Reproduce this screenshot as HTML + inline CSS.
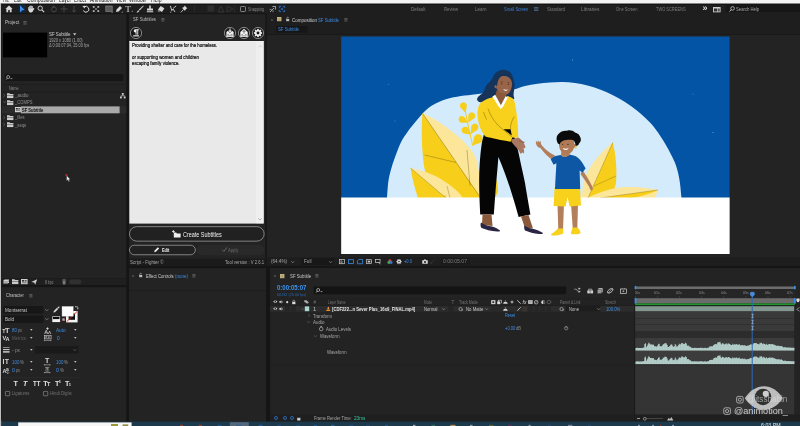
<!DOCTYPE html>
<html>
<head>
<meta charset="utf-8">
<title>After Effects - SF Subtitle</title>
<style>
*{margin:0;padding:0;box-sizing:border-box}
html,body{width:800px;height:426px;overflow:hidden;background:#151515}
body{position:relative;font-family:"Liberation Sans",sans-serif;font-size:5.5px;color:#b4b4b4;line-height:1}
.a{position:absolute}
.t{position:absolute;white-space:nowrap;line-height:1;display:block}
svg{position:absolute;overflow:visible}
</style>
</head>
<body>
<div id="root" style="position:absolute;left:0;top:0;width:800px;height:426px;will-change:transform;filter:blur(0.35px)">

<!-- ===== menu strip (cut off) ===== -->
<svg style="left:0px;top:0px" width="800" height="4"><rect x="0.00" y="0.00" width="800.00" height="3.80" fill="#f3f3f3"/></svg>
<div class="a" style="left:0;top:0;width:800px;height:3.6px;overflow:hidden">
<span class="t" style="top:-3px;font-size:6.8px;color:#1a1a1a;left:3.00px;transform:scaleX(0.548);transform-origin:left center;">File</span>
<span class="t" style="top:-3px;font-size:6.8px;color:#1a1a1a;left:14.00px;transform:scaleX(0.640);transform-origin:left center;">Edit</span>
<span class="t" style="top:-3px;font-size:6.8px;color:#1a1a1a;left:27.00px;transform:scaleX(0.741);transform-origin:left center;">Composition</span>
<span class="t" style="top:-3px;font-size:6.8px;color:#1a1a1a;left:58.50px;transform:scaleX(0.705);transform-origin:left center;">Layer</span>
<span class="t" style="top:-3px;font-size:6.8px;color:#1a1a1a;left:74.00px;transform:scaleX(0.695);transform-origin:left center;">Effect</span>
<span class="t" style="top:-3px;font-size:6.8px;color:#1a1a1a;left:89.50px;transform:scaleX(0.744);transform-origin:left center;">Animation</span>
<span class="t" style="top:-3px;font-size:6.8px;color:#1a1a1a;left:115.50px;transform:scaleX(0.684);transform-origin:left center;">View</span>
<span class="t" style="top:-3px;font-size:6.8px;color:#1a1a1a;left:128.50px;transform:scaleX(0.703);transform-origin:left center;">Window</span>
<span class="t" style="top:-3px;font-size:6.8px;color:#1a1a1a;left:150.50px;transform:scaleX(0.751);transform-origin:left center;">Help</span>
</div>

<!-- ===== toolbar ===== -->
<svg style="left:0px;top:3px" width="800" height="11"><rect x="0.00" y="0.80" width="800.00" height="9.40" fill="#1e1e1e"/></svg>
<svg style="left:0px;top:3px" width="2" height="424"><rect x="0.00" y="0.80" width="1.80" height="423.00" fill="#0c0c0c"/></svg>
<svg style="left:0px;top:3px" width="800" height="2"><rect x="0.00" y="0.80" width="800.00" height="0.80" fill="#0e0e0e"/></svg>

<!-- ===== panels ===== -->
<svg style="left:2px;top:14px" width="125" height="271"><rect x="0.00" y="0.20" width="124.30" height="270.80" fill="#232323"/></svg>
<svg style="left:129px;top:14px" width="137" height="252"><rect x="0.00" y="0.20" width="136.40" height="251.80" fill="#232323"/></svg>
<svg style="left:266px;top:12px" width="534" height="254"><rect x="0.80" y="0.80" width="533.20" height="252.80" fill="#232323"/></svg>
<svg style="left:2px;top:287px" width="125" height="135"><rect x="0.00" y="0.20" width="124.30" height="134.80" fill="#232323"/></svg>
<svg style="left:129px;top:268px" width="137" height="154"><rect x="0.00" y="0.20" width="137.00" height="153.80" fill="#232323"/></svg>
<svg style="left:270px;top:268px" width="530" height="154"><rect x="0.20" y="0.00" width="529.80" height="154.00" fill="#232323"/></svg>

<!-- ===== toolbar icons ===== -->
<svg style="left:5px;top:4.8px;" width="8" height="8" viewBox="0 0 8 8"><path d="M4,0.6 L7.6,3.9 L6.6,3.9 L6.6,7.2 L4.8,7.2 L4.8,5 L3.2,5 L3.2,7.2 L1.4,7.2 L1.4,3.9 L0.4,3.9 Z" fill="#d8d8d8"/></svg>
<svg style="left:18px;top:4px" width="8" height="9"><rect x="0.40" y="0.40" width="6.80" height="8.40" fill="#16263a"/></svg>
<svg style="left:17.6px;top:4.8px;" width="8" height="8" viewBox="0 0 8 8"><path d="M2,0.2 L6.6,5 L4.2,5.2 L2,7.6 Z" fill="#3b8eea"/></svg>
<svg style="left:27px;top:4.6px;" width="8" height="8" viewBox="0 0 8 8"><path d="M1.2,4.4 L1.2,2.7 Q1.2,2.1 1.75,2.1 Q2.3,2.1 2.3,2.7 L2.3,1.4 Q2.3,0.8 2.85,0.8 Q3.4,0.8 3.4,1.4 L3.4,1 Q3.4,0.4 4,0.4 Q4.6,0.4 4.6,1 L4.6,1.6 Q4.6,1 5.2,1 Q5.8,1 5.8,1.6 L5.8,3.8 L6.4,3.1 Q7,2.7 7.4,3.3 L6.3,5.6 Q5.6,7.5 4,7.5 Q1.8,7.5 1.2,4.4 Z" fill="#d8d8d8"/><path d="M2.3,2.6 V3.8 M3.4,1.4 V3.6 M4.6,1.6 V3.6" stroke="#1e1e1e" stroke-width="0.3"/></svg>
<svg style="left:37px;top:4.8px;" width="8" height="8" viewBox="0 0 8 8"><circle cx="3.2" cy="3.2" r="2.2" fill="none" stroke="#d8d8d8" stroke-width="0.9"/><path d="M4.8,4.8 L7.2,7.2" stroke="#d8d8d8" stroke-width="1.1"/></svg>
<svg style="left:50px;top:4.8px;" width="8" height="8" viewBox="0 0 8 8"><circle cx="4" cy="4.4" r="2.4" fill="none" stroke="#4a4a4a" stroke-width="0.9"/><path d="M2,1.2 L4.4,0.4 L4.2,2.8 Z" fill="#4a4a4a"/></svg>
<svg style="left:60px;top:4.8px;" width="8" height="8" viewBox="0 0 8 8"><path d="M4,0.6 L4,7.4 M0.6,4 L7.4,4" stroke="#4a4a4a" stroke-width="0.9"/></svg>
<svg style="left:70px;top:4.8px;" width="8" height="8" viewBox="0 0 8 8"><path d="M4,0.8 L4,7 M2.4,5.2 L4,7.2 L5.6,5.2" stroke="#4a4a4a" stroke-width="0.9" fill="none"/></svg>
<svg style="left:82px;top:4.8px;" width="8" height="8" viewBox="0 0 8 8"><path d="M2.2,2 A2.9,2.9 0 1 1 1.3,5.4" fill="none" stroke="#d8d8d8" stroke-width="1"/><path d="M0.4,0.9 L3.4,0.7 L2.6,3.6 Z" fill="#d8d8d8"/></svg>
<svg style="left:91.8px;top:4.8px;" width="8" height="8" viewBox="0 0 8 8"><path d="M0.8,1 h1.8 v1.8 h-1.8z M5.4,1 h1.8 v1.8 h-1.8z M0.8,5.2 h1.8 v1.8 h-1.8z M5.4,5.2 h1.8 v1.8 h-1.8z" fill="#b4b4b4"/><path d="M2.6,2.8 L5.4,5.2 M5.4,2.8 L2.6,5.2" stroke="#b4b4b4" stroke-width="0.5"/></svg>
<svg style="left:105px;top:4.8px;" width="8" height="8" viewBox="0 0 8 8"><rect x="0.8" y="1" width="6.4" height="5.6" fill="#5a5a5a" stroke="#8a8a8a" stroke-width="0.6"/><path d="M6.2,7.6 L7.6,7.6 L7.6,6.4 Z" fill="#d8d8d8"/></svg>
<svg style="left:114.5px;top:4.8px;" width="8" height="8" viewBox="0 0 8 8"><path d="M1,7 L1.6,4.4 L5,1 L7,3 L3.6,6.4 Z" fill="#d8d8d8"/><path d="M6.4,7.6 L7.8,7.6 L7.8,6.4 Z" fill="#d8d8d8"/></svg>
<span class="t" style="top:5px;font-size:9.2px;color:#d8d8d8;left:125.20px;font-family:'Liberation Serif',serif;">T</span>
<svg style="left:130.2px;top:9.2px;" width="4" height="4" viewBox="0 0 4 4"><path d="M1.4,2.6 L2.8,2.6 L2.8,1.4 Z" fill="#d8d8d8"/></svg>
<svg style="left:136px;top:4.8px;" width="8" height="8" viewBox="0 0 8 8"><path d="M7.2,0.6 L7.6,1.2 L3.6,5.6 L2.8,4.8 Z" fill="#d8d8d8"/><path d="M2.4,5.2 L3.2,6 C2.6,7.4 1.2,7.6 0.4,7.4 C1.4,6.8 1.4,5.8 2.4,5.2 Z" fill="#d8d8d8"/></svg>
<svg style="left:146.4px;top:4.8px;" width="8" height="8" viewBox="0 0 8 8"><path d="M3.2,0.6 h1.6 v2.8 h2.2 v2 h-6 v-2 h2.2 Z M0.8,6.2 h6.4 v1.1 h-6.4 Z" fill="#d8d8d8"/></svg>
<svg style="left:156.6px;top:4.8px;" width="8" height="8" viewBox="0 0 8 8"><path d="M3.6,1 L7.4,3.2 L5,7 L1,4.8 Z" fill="#d8d8d8"/><path d="M1,4.8 L3,6 L2.2,7.2 L0.6,6 Z" fill="#8a8a8a"/></svg>
<svg style="left:168.6px;top:4.8px;" width="8" height="8" viewBox="0 0 8 8"><path d="M1.4,0.8 L2.8,5.6 L4,4 L6,7 M4.2,3.4 L7.2,0.8" stroke="#d8d8d8" stroke-width="0.9" fill="none"/><path d="M0.8,7.4 l1.4,0 l0,-1.2z" fill="#d8d8d8"/></svg>
<svg style="left:180.2px;top:4.8px;" width="8" height="8" viewBox="0 0 8 8"><path d="M4.6,0.6 L7.4,3.4 L6.2,3.8 L5.2,5.6 L4.4,5.4 L2.6,3.6 L2.4,2.8 L4.2,1.8 Z" fill="#d8d8d8"/><path d="M3.4,4.6 L0.8,7.4" stroke="#d8d8d8" stroke-width="0.8"/></svg>
<svg style="left:194px;top:5px" width="1" height="8"><rect x="0.40" y="0.00" width="0.50" height="7.40" fill="#333"/></svg>
<svg style="left:234px;top:5px" width="1" height="8"><rect x="0.00" y="0.00" width="0.50" height="7.40" fill="#333"/></svg>
<svg style="left:207px;top:5px" width="8" height="7"><rect x="0.50" y="0.40" width="6.60" height="6.20" fill="#2e2e2e"/></svg>
<svg style="left:217px;top:4.8px;" width="8" height="8" viewBox="0 0 8 8"><path d="M4,1 L6.8,7 L1.2,7 Z" fill="none" stroke="#3a3a3a" stroke-width="0.8"/></svg>
<svg style="left:226px;top:4.8px;" width="8" height="8" viewBox="0 0 8 8"><path d="M1,1 L7,4 L1,7 Z" fill="none" stroke="#3a3a3a" stroke-width="0.8"/></svg>
<svg style="left:240px;top:5.6px;" width="6" height="6" viewBox="0 0 6 6"><rect x="0.5" y="0.5" width="5" height="5" rx="0.8" fill="none" stroke="#9a9a9a" stroke-width="0.8"/></svg>
<span class="t" style="top:7px;font-size:5.6px;color:#8a8a8a;left:248.00px;transform:scaleX(0.684);transform-origin:left center;">Snapping</span>
<svg style="left:269px;top:4.8px;" width="8" height="8" viewBox="0 0 8 8"><path d="M1,7 L5,3 M3.4,1.6 L6.6,1.4 L6.4,4.6" stroke="#b0b0b0" stroke-width="0.9" fill="none"/><path d="M0.6,4.4 l2,0 M4,7.2 l0,-2" stroke="#b0b0b0" stroke-width="0.7"/></svg>
<svg style="left:277px;top:4px" width="9" height="9"><rect x="0.60" y="0.60" width="8.00" height="7.80" fill="#1a2433"/></svg>
<svg style="left:277.6px;top:4.8px;" width="8" height="8" viewBox="0 0 8 8"><path d="M1.4,3 V1.4 H3 M5,1.4 H6.6 V3 M6.6,5 V6.6 H5 M3,6.6 H1.4 V5" stroke="#3177d0" stroke-width="0.8" fill="none"/><path d="M3,3 L5,5 M5,3 L3,5" stroke="#3177d0" stroke-width="0.6"/></svg>

<!-- ===== workspace bar ===== -->
<span class="t" style="top:7px;font-size:5.4px;color:#7c7c7c;left:411.30px;transform:scaleX(0.853);transform-origin:left center;">Default</span>
<span class="t" style="top:7px;font-size:5.4px;color:#7c7c7c;left:444.00px;transform:scaleX(0.791);transform-origin:left center;">Review</span>
<span class="t" style="top:7px;font-size:5.4px;color:#7c7c7c;left:475.40px;transform:scaleX(0.825);transform-origin:left center;">Learn</span>
<span class="t" style="top:7px;font-size:5.4px;color:#3a7fd6;left:504.20px;transform:scaleX(0.760);transform-origin:left center;">Small Screen</span>
<span class="t" style="top:7px;font-size:5.4px;color:#7c7c7c;left:546.50px;transform:scaleX(0.821);transform-origin:left center;">Standard</span>
<span class="t" style="top:7px;font-size:5.4px;color:#7c7c7c;left:581.40px;transform:scaleX(0.888);transform-origin:left center;">Libraries</span>
<span class="t" style="top:7px;font-size:5.4px;color:#7c7c7c;left:616.20px;transform:scaleX(0.750);transform-origin:left center;">One Screen</span>
<span class="t" style="top:7px;font-size:5.4px;color:#7c7c7c;left:655.80px;transform:scaleX(0.736);transform-origin:left center;">TWO SCREENS</span>
<svg style="left:534.2px;top:7.4px;" width="4.4" height="4" viewBox="0 0 4.4 4"><path d="M0,0.6 H4.4 M0,2 H4.4 M0,3.4 H4.4" stroke="#5a7fb0" stroke-width="0.7"/></svg>
<span class="t" style="top:3.95px;font-size:9px;color:#d8d8d8;font-weight:bold;left:702.60px;">»</span>
<svg style="left:713px;top:6.6px;" width="7.6" height="5.4" viewBox="0 0 7.6 5.4"><rect x="0" y="0" width="7.6" height="5.4" fill="#cfcfcf"/><rect x="0.9" y="1.5" width="3.4" height="3" fill="#333"/><rect x="5" y="1.5" width="1.8" height="3" fill="#555"/></svg>
<svg style="left:725px;top:4px" width="75" height="8"><rect x="0.60" y="0.80" width="74.40" height="7.20" fill="#161616"/></svg>
<svg style="left:728.6px;top:6.2px;" width="6" height="6" viewBox="0 0 6 6"><circle cx="3.6" cy="2.4" r="1.8" fill="none" stroke="#c8c8c8" stroke-width="0.8"/><path d="M2.3,3.7 L0.5,5.6" stroke="#c8c8c8" stroke-width="0.9"/></svg>
<span class="t" style="top:7px;font-size:5.4px;color:#a8a8a8;left:736.40px;transform:scaleX(0.781);transform-origin:left center;">Search Help</span>

<!-- ===== project panel ===== -->
<span class="t" style="top:20px;font-size:5.8px;color:#c4c4c4;left:5.00px;transform:scaleX(0.787);transform-origin:left center;">Project</span>
<svg style="left:23.4px;top:20.8px;" width="4" height="3.6" viewBox="0 0 4 3.6"><path d="M0.3,0.5 H3.7 M0.3,1.8 H3.7 M0.3,3.1 H3.7" stroke="#8e8e8e" stroke-width="0.5"/></svg>
<svg style="left:3px;top:32px" width="45" height="26"><rect x="0.00" y="0.60" width="44.20" height="24.80" fill="#000"/></svg>
<span class="t" style="top:32px;font-size:5.6px;color:#d6d6d6;left:49.20px;transform:scaleX(0.781);transform-origin:left center;">SF Subtitle</span>
<svg style="left:73px;top:33.4px;" width="3.4" height="2.6" viewBox="0 0 3.4 2.6"><path d="M0,0.2 L3.4,0.2 L1.7,2.4 Z" fill="#c8c8c8"/></svg>
<span class="t" style="top:38px;font-size:5.2px;color:#a4a4a4;left:49.20px;transform:scaleX(0.774);transform-origin:left center;">1920 x 1080 (1.00)</span>
<span class="t" style="top:43px;font-size:5.2px;color:#a4a4a4;left:49.20px;transform:scaleX(0.755);transform-origin:left center;">Δ 0:00:07:04, 25.00 fps</span>
<svg style="left:4px;top:74px" width="120" height="7"><rect x="0.80" y="0.00" width="118.60" height="7.00" fill="#161616" rx="1.00"/></svg>
<svg style="left:6px;top:75px;" width="7" height="5" viewBox="0 0 7 5"><circle cx="2.2" cy="2" r="1.5" fill="none" stroke="#c0c0c0" stroke-width="0.7"/><path d="M1.2,3.1 L0.2,4.6 M4.6,3.6 l1.8,0" stroke="#c0c0c0" stroke-width="0.7"/></svg>
<svg style="left:2px;top:84px" width="125" height="1"><rect x="0.00" y="0.20" width="124.30" height="0.50" fill="#1b1b1b"/></svg>
<span class="t" style="top:87px;font-size:4.8px;color:#8e8e8e;left:9.00px;transform:scaleX(0.750);transform-origin:left center;">Name</span>
<svg style="left:2px;top:91px" width="125" height="2"><rect x="0.00" y="0.80" width="124.30" height="0.60" fill="#1a1a1a"/></svg>
<svg style="left:2.8px;top:93.7px;" width="2.4" height="3.2" viewBox="0 0 2.4 3.2"><path d="M0.3,0.2 L2,1.6 L0.3,3" stroke="#6a6a6a" stroke-width="0.6" fill="none"/></svg>
<svg style="left:7.2px;top:92.7px;" width="6.4" height="5.2" viewBox="0 0 6.4 5.2"><path d="M0,0.3 H2.6 L3.2,1.1 H6.4 V1.9 H0 Z" fill="#cacaca"/><rect x="0" y="2.4" width="6.4" height="2.7" fill="#cacaca"/></svg>
<span class="t" style="top:93px;font-size:5.6px;color:#929292;left:15.40px;transform:scaleX(0.809);transform-origin:left center;">_audio</span>
<svg style="left:2.8px;top:101.4px;" width="3.2" height="2.4" viewBox="0 0 3.2 2.4"><path d="M0.2,0.3 L1.6,2 L3,0.3" stroke="#6a6a6a" stroke-width="0.6" fill="none"/></svg>
<svg style="left:7.2px;top:100px;" width="6.4" height="5.2" viewBox="0 0 6.4 5.2"><path d="M0,0.3 H2.6 L3.2,1.1 H6.4 V1.9 H0 Z" fill="#cacaca"/><rect x="0" y="2.4" width="6.4" height="2.7" fill="#cacaca"/></svg>
<span class="t" style="top:100px;font-size:5.6px;color:#929292;left:15.40px;transform:scaleX(0.736);transform-origin:left center;">_COMPS</span>
<svg style="left:2.8px;top:116px;" width="2.4" height="3.2" viewBox="0 0 2.4 3.2"><path d="M0.3,0.2 L2,1.6 L0.3,3" stroke="#6a6a6a" stroke-width="0.6" fill="none"/></svg>
<svg style="left:7.2px;top:115px;" width="6.4" height="5.2" viewBox="0 0 6.4 5.2"><path d="M0,0.3 H2.6 L3.2,1.1 H6.4 V1.9 H0 Z" fill="#cacaca"/><rect x="0" y="2.4" width="6.4" height="2.7" fill="#cacaca"/></svg>
<span class="t" style="top:115px;font-size:5.6px;color:#929292;left:15.40px;transform:scaleX(0.734);transform-origin:left center;">_files</span>
<svg style="left:2.8px;top:123.4px;" width="2.4" height="3.2" viewBox="0 0 2.4 3.2"><path d="M0.3,0.2 L2,1.6 L0.3,3" stroke="#6a6a6a" stroke-width="0.6" fill="none"/></svg>
<svg style="left:7.2px;top:122.4px;" width="6.4" height="5.2" viewBox="0 0 6.4 5.2"><path d="M0,0.3 H2.6 L3.2,1.1 H6.4 V1.9 H0 Z" fill="#cacaca"/><rect x="0" y="2.4" width="6.4" height="2.7" fill="#cacaca"/></svg>
<span class="t" style="top:123px;font-size:5.6px;color:#929292;left:15.40px;transform:scaleX(0.749);transform-origin:left center;">_seqs</span>
<svg style="left:2px;top:106px" width="125" height="8"><rect x="0.00" y="0.20" width="124.30" height="7.20" fill="#2b2b2b"/></svg>
<svg style="left:20px;top:106px" width="100" height="8"><rect x="0.80" y="0.40" width="98.80" height="6.90" fill="#a9a9a9"/></svg>
<svg style="left:14.6px;top:107.2px;" width="5.8" height="5.2" viewBox="0 0 5.8 5.2"><rect x="0" y="0" width="5.8" height="5.2" fill="#d8d8d8"/><rect x="0.8" y="1" width="2" height="1.6" fill="#333"/><rect x="3.2" y="1" width="1.8" height="1.6" fill="#666"/><path d="M0.8,3.6 H5" stroke="#444" stroke-width="0.6"/></svg>
<span class="t" style="top:108px;font-size:5.8px;color:#0a0a0a;font-weight:bold;left:22.00px;transform:scaleX(0.700);transform-origin:left center;">SF Subtitle</span>
<svg style="left:119.8px;top:92.6px;" width="5.6" height="5.4" viewBox="0 0 5.6 5.4"><rect x="1.9" y="0" width="1.8" height="1.8" fill="#cfcfcf"/><rect x="0" y="3.6" width="1.8" height="1.8" fill="#cfcfcf"/><rect x="3.8" y="3.6" width="1.8" height="1.8" fill="#cfcfcf"/><path d="M2.8,1.8 V2.8 M0.9,3.6 V2.8 H4.7 V3.6" stroke="#cfcfcf" stroke-width="0.6" fill="none"/></svg>
<svg style="left:2px;top:278px" width="125" height="7"><rect x="0.00" y="0.60" width="124.30" height="6.40" fill="#1f1f1f"/></svg>
<svg style="left:2px;top:278px" width="125" height="1"><rect x="0.00" y="0.00" width="124.30" height="0.50" fill="#191919"/></svg>
<svg style="left:2.6px;top:279.2px;" width="6.4" height="5.2" viewBox="0 0 6.4 5.2"><path d="M0.4,1.6 L1.6,0.4 H6 V3.2 L4.8,4.6 H0.4 Z" fill="#d0d0d0"/><path d="M0.4,3 H4.6 L6,1.6" stroke="#333" stroke-width="0.5" fill="none"/></svg>
<svg style="left:11.6px;top:279.2px;" width="6.4" height="5.2" viewBox="0 0 6.4 5.2"><path d="M0,0.3 H2.6 L3.2,1.1 H6.4 V1.9 H0 Z" fill="#cacaca"/><rect x="0" y="2.4" width="6.4" height="2.7" fill="#cacaca"/></svg>
<svg style="left:21.2px;top:279.2px;" width="6.6" height="5.2" viewBox="0 0 6.6 5.2"><rect x="0" y="0" width="6.6" height="5.2" fill="#d0d0d0"/><rect x="1" y="1" width="2.2" height="1.6" fill="#333"/><rect x="3.8" y="1" width="1.8" height="1.6" fill="#555"/><path d="M1,3.8 H5.6" stroke="#333" stroke-width="0.6"/></svg>
<svg style="left:31px;top:278.8px;" width="6.4" height="6" viewBox="0 0 6.4 6"><path d="M0.2,3 L6.2,0.2 L4.2,5.8 L3.2,3.6 Z" fill="#d0d0d0"/></svg>
<span class="t" style="top:281px;font-size:4.6px;color:#8a8a8a;left:44.60px;transform:scaleX(0.746);transform-origin:left center;">8 bpc</span>
<svg style="left:61.6px;top:279px;" width="4.2" height="5.6" viewBox="0 0 4.2 5.6"><path d="M0,0.9 H4.2 M1.4,0.2 H2.8" stroke="#7a7a7a" stroke-width="0.6"/><path d="M0.5,1.5 H3.7 L3.4,5.4 H0.8 Z" fill="#7a7a7a"/></svg>
<svg style="left:69px;top:279px" width="13" height="6"><rect x="0.00" y="0.40" width="12.40" height="4.80" fill="#303030" rx="2.40"/></svg>
<svg style="left:65.2px;top:173.6px;" width="6" height="8" viewBox="0 0 6 8"><circle cx="1.4" cy="1.2" r="1.1" fill="#c0283c"/><path d="M1.6,1.6 L1.6,7 L2.9,5.8 L3.8,7.8 L4.7,7.4 L3.8,5.5 L5.4,5.4 Z" fill="#f2f2f2" stroke="#111" stroke-width="0.3"/></svg>

<!-- ===== SF Subtitles panel ===== -->
<span class="t" style="top:17px;font-size:5.6px;color:#bdbdbd;left:133.00px;transform:scaleX(0.762);transform-origin:left center;">SF Subtitles</span>
<svg style="left:160.6px;top:18px;" width="3.8" height="3.4" viewBox="0 0 3.8 3.4"><path d="M0.3,0.5 H3.5 M0.3,1.75 H3.5 M0.3,3 H3.5" stroke="#8e8e8e" stroke-width="0.5"/></svg>
<svg style="left:129.9px;top:26.9px;" width="12" height="12" viewBox="0 0 12 12"><circle cx="6" cy="6" r="5.6" fill="#181818" stroke="#a2a2a2" stroke-width="0.8"/><path d="M5.3,2.3 H8.8 V3.2 H8.2 V7.7 H7.3 V3.2 H6.5 V7.7 H5.6 V5.5 A1.7,1.6 0 0 1 5.3,2.3 Z" fill="#f2f2f2"/><rect x="3.2" y="8.3" width="5.8" height="1.1" fill="#f2f2f2"/></svg>
<svg style="left:223.8px;top:26.9px;" width="12" height="12" viewBox="0 0 12 12"><circle cx="6" cy="6" r="5.6" fill="#181818" stroke="#a2a2a2" stroke-width="0.8"/><path d="M5.5,1.4 H6.5 V3.6 H7.9 L6,5.6 L4.1,3.6 H5.5 Z" fill="#f2f2f2"/><path d="M2.4,5 L3.6,3.9 H4 L6,6 L8,3.9 H8.4 L9.6,5 V10 H2.4 Z" fill="#f2f2f2"/><path d="M3.4,7.4 H5.2 M6.8,7.4 H8.6 M3.4,8.8 H8.6" stroke="#555" stroke-width="0.6"/></svg>
<svg style="left:237.5px;top:26.9px;" width="12" height="12" viewBox="0 0 12 12"><circle cx="6" cy="6" r="5.6" fill="#181818" stroke="#a2a2a2" stroke-width="0.8"/><path d="M6,1.7 L9.7,4.9 V10 H2.3 V4.9 Z" fill="#f2f2f2"/><path d="M6,3.6 V6.6 M4.7,4.9 L6,3.5 L7.3,4.9" stroke="#3a3a3a" stroke-width="0.7" fill="none"/><path d="M3.4,7.6 H5 M7,7.6 H8.6 M3.4,8.9 H8.6" stroke="#555" stroke-width="0.6"/></svg>
<svg style="left:251.5px;top:26.9px;" width="12" height="12" viewBox="0 0 12 12"><circle cx="6" cy="6" r="5.6" fill="#181818" stroke="#a2a2a2" stroke-width="0.8"/><g transform="translate(6 6)"><rect x="-0.85" y="-4.1" width="1.7" height="8.2" fill="#f2f2f2" transform="rotate(0)"/><rect x="-0.85" y="-4.1" width="1.7" height="8.2" fill="#f2f2f2" transform="rotate(45)"/><rect x="-0.85" y="-4.1" width="1.7" height="8.2" fill="#f2f2f2" transform="rotate(90)"/><rect x="-0.85" y="-4.1" width="1.7" height="8.2" fill="#f2f2f2" transform="rotate(135)"/><circle r="2.9" fill="#f2f2f2"/><circle r="1.45" fill="#181818"/></g></svg>
<svg style="left:129px;top:41px" width="135" height="183"><rect x="0.30" y="0.00" width="134.50" height="182.60" fill="#e9e9e9"/><rect x="0.30" y="0.00" width="134.50" height="0.60" fill="#f6f6f6"/></svg>
<svg style="left:256px;top:42px" width="1" height="182"><rect x="0.40" y="0.20" width="0.50" height="181.00" fill="#f4f4f4"/></svg>
<svg style="left:256px;top:42px" width="8" height="182"><rect x="0.90" y="0.20" width="6.40" height="181.00" fill="#efefef"/></svg>
<svg style="left:258.2px;top:44.6px;" width="4" height="2.6" viewBox="0 0 4 2.6"><path d="M0.3,2.3 L2,0.5 L3.7,2.3" stroke="#b8b8b8" stroke-width="0.6" fill="none"/></svg>
<svg style="left:258.2px;top:218.4px;" width="4" height="2.6" viewBox="0 0 4 2.6"><path d="M0.3,0.3 L2,2.1 L3.7,0.3" stroke="#8a8a8a" stroke-width="0.6" fill="none"/></svg>
<span class="t" style="top:43px;font-size:5.4px;color:#101010;left:132.00px;transform:scaleX(0.808);transform-origin:left center;-webkit-text-stroke:0.22px #101010;">Providing shelter and care for the homeless.</span>
<span class="t" style="top:55px;font-size:5.4px;color:#101010;left:132.00px;transform:scaleX(0.824);transform-origin:left center;-webkit-text-stroke:0.22px #101010;">or supporting women and children</span>
<span class="t" style="top:61px;font-size:5.4px;color:#101010;left:132.00px;transform:scaleX(0.793);transform-origin:left center;-webkit-text-stroke:0.22px #101010;">escaping family violence.</span>
<svg style="left:129px;top:226px" width="136" height="16"><rect x="0.45" y="0.65" width="134.70" height="14.50" fill="#212121" rx="7.25" stroke="#8c8c8c" stroke-width="0.9"/></svg>
<svg style="left:171.6px;top:230.2px;" width="9" height="8" viewBox="0 0 9 8"><path d="M1.8,2.6 H4.2 L4.9,3.6 H8.6 V7.6 H1.8 Z" fill="#f0f0f0"/><path d="M1.4,0 V3 M0,1.5 H2.8" stroke="#f0f0f0" stroke-width="0.8"/></svg>
<span class="t" style="top:231px;font-size:7.2px;color:#f0f0f0;left:182.60px;transform:scaleX(0.757);transform-origin:left center;">Create Subtitles</span>
<svg style="left:129px;top:244px" width="67" height="12"><rect x="0.45" y="1.25" width="65.90" height="9.50" fill="#212121" rx="4.75" stroke="#8c8c8c" stroke-width="0.9"/></svg>
<svg style="left:154.2px;top:247.2px;" width="5.4" height="5.4" viewBox="0 0 5.4 5.4"><path d="M0.2,5.2 L0.7,3.5 L3.9,0.3 L5.1,1.5 L1.9,4.7 Z" fill="#f4f4f4"/></svg>
<span class="t" style="top:248px;font-size:5.6px;color:#f4f4f4;font-weight:bold;left:161.60px;transform:scaleX(0.681);transform-origin:left center;">Edit</span>
<svg style="left:197px;top:244px" width="68" height="12"><rect x="0.00" y="0.80" width="67.60" height="10.40" fill="#292929" rx="5.20"/></svg>
<svg style="left:222px;top:247.4px;" width="5.2" height="5" viewBox="0 0 5.2 5"><path d="M0.4,2.8 L1.9,4.4 L4.8,0.5" stroke="#6c6c6c" stroke-width="0.9" fill="none"/></svg>
<span class="t" style="top:248px;font-size:5.4px;color:#6c6c6c;left:228.20px;transform:scaleX(0.770);transform-origin:left center;">Apply</span>
<svg style="left:129px;top:258px" width="137" height="8"><rect x="0.00" y="0.60" width="136.40" height="7.40" fill="#1b1b1b"/></svg>
<span class="t" style="top:260px;font-size:5.2px;color:#a8a8a8;left:129.60px;transform:scaleX(0.853);transform-origin:left center;">Script - Fighter ©</span>
<span class="t" style="top:260px;font-size:5.2px;color:#a8a8a8;left:225.00px;transform:scaleX(0.807);transform-origin:left center;">Tool version : V 2.6.1</span>

<!-- ===== effect controls panel ===== -->
<svg style="left:129px;top:290px" width="137" height="1"><rect x="0.00" y="0.00" width="137.00" height="0.70" fill="#1c1c1c"/></svg>
<svg style="left:132.2px;top:275px;" width="2" height="2" viewBox="0 0 2 2"><path d="M0.2,0.2 L1.8,1.8 M1.8,0.2 L0.2,1.8" stroke="#7a7a7a" stroke-width="0.5"/></svg>
<svg style="left:138.6px;top:273.4px;" width="3.4" height="4.4" viewBox="0 0 3.4 4.4"><rect x="0.2" y="2" width="3" height="2.2" fill="#bdbdbd"/><path d="M0.8,2 V1.2 A0.9,0.9 0 0 1 2.6,1.2" stroke="#bdbdbd" stroke-width="0.6" fill="none"/></svg>
<span class="t" style="top:274px;font-size:5.6px;color:#d0d0d0;left:145.60px;transform:scaleX(0.754);transform-origin:left center;">Effect Controls</span>
<span class="t" style="top:274px;font-size:5.6px;color:#3b8eea;left:174.60px;transform:scaleX(0.803);transform-origin:left center;">(none)</span>
<svg style="left:191.6px;top:274.4px;" width="3.8" height="3.4" viewBox="0 0 3.8 3.4"><path d="M0.3,0.5 H3.5 M0.3,1.75 H3.5 M0.3,3 H3.5" stroke="#8e8e8e" stroke-width="0.5"/></svg>

<!-- ===== comp panel ===== -->
<svg style="left:266px;top:12px" width="534" height="23"><rect x="0.80" y="0.80" width="533.20" height="21.40" fill="#1e1e1e"/></svg>
<svg style="left:266px;top:34px" width="534" height="1"><rect x="0.80" y="0.00" width="533.20" height="0.90" fill="#181818"/></svg>
<svg style="left:271.4px;top:18.8px;" width="2" height="2" viewBox="0 0 2 2"><path d="M0.2,0.2 L1.8,1.8 M1.8,0.2 L0.2,1.8" stroke="#7a7a7a" stroke-width="0.5"/></svg>
<svg style="left:277.2px;top:17.4px;" width="4.4" height="4.2" viewBox="0 0 4.4 4.2"><rect width="4.4" height="4.2" fill="#cbb98a"/><path d="M0,1.2 H4.4 M2.2,1.2 V4.2 M0,2.8 H4.4" stroke="#8a7a50" stroke-width="0.35"/></svg>
<svg style="left:285.6px;top:17.4px;" width="3.4" height="4.4" viewBox="0 0 3.4 4.4"><rect x="0.2" y="2" width="3" height="2.2" fill="#bdbdbd"/><path d="M0.8,2 V1.2 A0.9,0.9 0 0 1 2.6,1.2" stroke="#bdbdbd" stroke-width="0.6" fill="none"/></svg>
<span class="t" style="top:18px;font-size:5.6px;color:#d0d0d0;left:292.20px;transform:scaleX(0.803);transform-origin:left center;">Composition</span>
<span class="t" style="top:18px;font-size:5.6px;color:#3b8eea;left:318.20px;transform:scaleX(0.767);transform-origin:left center;">SF Subtitle</span>
<svg style="left:343.6px;top:18.2px;" width="3.8" height="3.4" viewBox="0 0 3.8 3.4"><path d="M0.3,0.5 H3.5 M0.3,1.75 H3.5 M0.3,3 H3.5" stroke="#8e8e8e" stroke-width="0.5"/></svg>
<svg style="left:276px;top:26px" width="32" height="7"><rect x="0.00" y="0.00" width="31.60" height="6.60" fill="#161616"/></svg>
<span class="t" style="top:27px;font-size:5.6px;color:#3b8eea;left:278.20px;transform:scaleX(0.767);transform-origin:left center;">SF Subtitle</span>
<!-- ===== composition artwork ===== -->
<svg id="art" style="left:0;top:0" width="800" height="426" viewBox="0 0 800 426">
<defs><clipPath id="cc"><rect x="341.2" y="36.4" width="388.4" height="217.5"/></clipPath></defs>
<g clip-path="url(#cc)">
<rect x="341" y="36" width="389" height="219" fill="#0354a5"/>
<g fill="#cfe4f6" opacity="0.7"><circle cx="572.6" cy="60" r="0.5"/><circle cx="713" cy="132.6" r="0.5"/><circle cx="395" cy="121" r="0.45"/><circle cx="693" cy="94" r="0.4"/><circle cx="388.6" cy="84.6" r="0.4"/></g>
<!-- light blob -->
<path fill="#d3ebfb" d="M387.0,198.0 C387.2,195.1 387.7,185.5 388.5,180.4 C389.3,175.3 390.4,171.8 391.6,167.5 C392.9,163.2 394.6,158.3 396.0,154.6 C397.4,150.8 398.4,147.9 399.7,145.0 C401.0,142.1 402.1,139.9 404.0,137.0 C405.9,134.1 408.7,130.3 411.0,127.3 C413.3,124.3 415.7,121.5 418.0,118.8 C420.3,116.1 422.7,113.2 425.0,111.0 C427.3,108.8 429.4,107.0 432.0,105.4 C434.6,103.8 437.5,102.4 440.6,101.2 C443.7,100.0 446.4,98.9 450.4,98.0 C454.4,97.1 459.6,96.3 464.5,95.6 C469.4,94.9 474.1,94.3 480.0,93.7 C485.9,93.1 494.4,92.7 500.0,92.0 C505.6,91.3 509.5,90.5 513.7,89.5 C517.9,88.5 521.0,87.0 525.0,86.0 C529.0,85.0 533.3,84.3 537.5,83.7 C541.7,83.1 545.8,82.8 550.0,82.5 C554.2,82.2 558.3,81.9 562.5,82.0 C566.7,82.1 570.8,82.4 575.0,83.0 C579.2,83.6 583.3,84.4 587.5,85.5 C591.7,86.6 595.8,87.9 600.0,89.5 C604.2,91.1 608.3,92.9 612.5,95.0 C616.7,97.1 620.8,99.3 625.0,102.0 C629.2,104.7 633.3,107.6 637.5,111.0 C641.7,114.4 646.6,118.9 650.0,122.5 C653.4,126.1 655.4,128.8 658.0,132.5 C660.6,136.2 663.4,140.8 665.6,144.5 C667.8,148.2 669.3,151.0 671.0,154.5 C672.7,158.0 674.6,161.3 676.0,165.6 C677.4,169.8 678.6,174.6 679.5,180.0 C680.4,185.4 681.2,195.0 681.5,198.0 Z"/>
<!-- small round-leaf plant -->
<g fill="#f7cf1a">
<path d="M465.4,111.5 C467,121 469.6,132 472.8,146" stroke="#f7cf1a" stroke-width="1" fill="none"/>
<path d="M465.6,112.8 L461.0,108.3 A3.5,3.5 0 1 1 466.8,106.5 Z M468.4,122.8 L462.0,122.8 A3.4,3.4 0 1 1 464.8,117.5 Z M468.2,122.6 L468.3,115.7 A3.5,3.5 0 1 1 473.8,118.7 Z M471.2,134.6 L464.7,133.8 A3.6,3.6 0 1 1 468.5,128.7 Z M470.6,134.2 L471.2,126.9 A3.6,3.6 0 1 1 476.8,130.2 Z M472.6,145.5 L473.9,138.1 A4.4,4.4 0 1 1 479.7,142.9 Z"/>
</g>
<!-- big left leaf -->
<path fill="#fce69a" d="M422.3,113 C432,117 444,125 454,133 C463,140 471,148 476,158 C479,168 481,185 481,198 L440,198 Z"/>
<path fill="#f7cf1a" d="M422.3,113 L481,198 L436,198 C428,185 424,170 423,158 C421.5,143 421.5,128 422.3,113 Z"/>
<path fill="#f7cf1a" d="M424.6,155 L456,162.5 L481,198 L436,198 Z"/>
<path d="M422.3,113 L480,197 M424.6,155 L456,162.5 M467,150 L470,186" stroke="#5a4a10" stroke-width="0.35" fill="none"/>
<!-- lower left leaf -->
<path fill="#fce69a" d="M410.5,168 C422,170 436,175 447,183 C454,188 460,193 463,198 L425,198 Z"/>
<path fill="#f7cf1a" d="M410.5,168 L446,198 L418,198 C415,189 412,178 410.5,168 Z"/>
<path fill="#f7cf1a" d="M419,195.5 L446,195.5 L446,198 L418,198 Z"/>
<path d="M410.5,168 L446,198 M447,186 L450,198" stroke="#5a4a10" stroke-width="0.3" fill="none"/>
<!-- right leaves -->
<path fill="#fce69a" d="M612.8,142.5 C603,150 592,162 586,175 C583,183 582,191 582,198 L602,198 Z"/>
<path fill="#f7cf1a" d="M612.8,142.5 C616,155 617,170 616,183 L612,198 L588,198 Z"/>
<path fill="#fce69a" d="M588,198 C598,192 612,188 625,187 C637,186.5 650,188 658,190 L655,198 Z"/>
<path fill="#f7cf1a" d="M658,190 C652,193 642,196.5 632,198 L600,198 Z"/>
<path d="M612.8,142.5 L588,198 M594,186 L616,176 M600,198 L658,190" stroke="#5a4a10" stroke-width="0.3" fill="none"/>
<path fill="#f7cf1a" d="M494.5,176 C497,180 498.4,186 498,192 L495,198 L493,198 Z"/>
<!-- floor -->
<rect x="341" y="197.5" width="389" height="58" fill="#ffffff"/>

<!-- ===== woman ===== -->
<!-- hair back -->
<path fill="#16335a" d="M503,69.8 C507,69.6 510.5,71.6 512.2,75.4 C514,79.4 514.8,83 514.6,86 C514.4,90 513.4,93 513.6,95.4 C513.8,97 514.4,98 514.2,99 C512.4,99.6 510,98 508.8,96.4 L496,99.4 C492,101.2 486,102.8 480.6,102.2 C478,102 476.6,100.2 477.2,98.4 C477.8,96.4 480,95.4 482,93.8 C484,92 484.4,89.4 485.8,86.4 C487.4,83.4 490.8,81.6 492.4,78.6 C493.8,74 497.6,70.2 503,69.8 Z"/>
<!-- neck -->
<path fill="#8a583a" d="M496.2,90.6 L506.4,94.4 L504.6,103 L500.4,107.4 L496.6,99.6 Z"/>
<!-- face -->
<path fill="#99654a" d="M495.8,81.6 C496.8,77.8 500.6,75.6 504.8,76 C508.8,76.4 511.6,79.2 512,83.2 C512.2,87.2 510.8,91.6 508.2,93.8 C505.6,95.6 501.8,95 499.2,92.4 C496.6,89.6 495,85.4 495.8,81.6 Z"/>
<path fill="#16335a" d="M494.6,86 C493.4,80.6 496.6,75 503.4,74.4 C499.6,77 497.6,80.2 497.4,84 C497.3,85.6 496.6,86.6 495.8,87.4 Z"/>
<ellipse cx="495.6" cy="86.6" rx="1.1" ry="1.6" fill="#99654a"/>
<path fill="#ffffff" d="M503.2,89 C504.6,89.9 506.4,90 507.8,89.2 C507.2,91.2 504.2,91.4 503.2,89 Z"/>
<circle cx="501.8" cy="83.8" r="0.6" fill="#5a1a14"/><circle cx="508.4" cy="84.5" r="0.6" fill="#5a1a14"/>
<path d="M500.4,82 L503,81.8 M507.2,82.4 L509.8,82.9" stroke="#2a1a10" stroke-width="0.4"/>
<!-- pants -->
<path fill="#050505" d="M485,130 L513,133 C515.5,139.5 517,146 518.8,154 C520.6,163 523,173 525,183 C526.6,193 528.6,204 530.4,214.4 L518.6,217 C516.6,209 514,201 511.6,193 C508,181 503,168 498.4,157 C497.4,170 496,184 495,198 L493.8,214.6 L480.2,214.6 C479.6,202 479,189 479.2,177 C479.4,165 480.4,152 482,142 Z"/>
<!-- ankles -->
<path fill="#8a583a" d="M482.5,214.5 L491.5,214.5 L492.5,226 L482,225 Z"/>
<path fill="#8a583a" d="M521,216.5 L528.5,215 L533,228.5 L525,228 Z"/>
<!-- shoes -->
<path fill="#2a2542" d="M481,222.5 C484,225 488,226 492,226.5 C495,227.5 498.5,229 500,230.5 C500.5,231.5 499,231.8 497,231.5 C491,231 485,229.5 481.5,228 C480.3,226.5 480.3,224 481,222.5 Z"/>
<path fill="#2a2542" d="M524.5,225.5 C527,227.5 530,228.5 533.5,229 C537,230 541,231.5 543,233 C543.3,234 541.5,234.2 539,234 C534,233.5 528.5,232 525,230.5 C524,229 524,227 524.5,225.5 Z"/>
<!-- yellow top incl. arms -->
<path fill="#f8d11c" d="M493,97 C488,98.6 481.6,100.8 479.4,104.6 C477.4,108.4 477.2,113.6 477.8,118 C478.4,123 479.8,127.6 481.8,131.2 C482.8,133.2 484,135 485.3,136.6 C492,138.4 503,140.6 510.6,141.8 L512.4,137.4 L518.3,137.7 C518.2,130 517.6,121 516.6,113.6 C515.8,107.6 515,101.6 513.2,98.8 C511.4,97.6 509.2,96.6 507,96 L501,107 Z"/>
<!-- waist notch -->
<path fill="#050505" d="M503.4,129.3 L510.6,129.3 L511.8,135.4 Z"/>
<path d="M488,108.6 C490,114.6 493.4,120.4 497.6,124.8 C502,129 507.6,133.4 512.3,137.2 M514.2,116.6 C512.6,119.4 511.2,122.4 510.7,125.4 C510.4,127 510.5,128.4 510.6,129.4 M483.6,112 C484.4,114.6 485.4,117.4 486.6,119.6" stroke="#4a3a08" stroke-width="0.35" fill="none"/>
<!-- collar -->
<path fill="#8a583a" d="M495.2,95.4 L500.8,106.4 L506.4,96.8 L506,94 L497,91.4 Z"/>
<path fill="#ffffff" d="M492.4,96.4 L495.2,94.8 L500.9,105.2 L505.6,96.2 L507.8,97.6 L503.2,106.4 L500.8,109 L498.4,106.2 Z"/>
<!-- hands -->
<path fill="#aa7860" d="M511,139.5 L518.3,137.6 C520.4,138.8 522.2,140.4 523.4,142.6 C524.6,144.4 525.4,146.4 525.4,147.8 C524.8,148.6 524,148.2 523.4,147.4 C524,149.4 524.4,151.6 524,153 C523.2,153.6 522.6,153 522.2,152 C522,153 521.4,153.8 520.4,153.6 C519.4,152 518.6,150 517.4,148.4 C515.4,146.6 513,144 511.6,142 Z"/>
<path fill="#96664c" d="M519,139.4 C520.6,140.4 522.6,141.4 524.4,141.8 C525,142.4 524.6,143 523.6,143 C522,142.8 520.4,142 519,141 Z"/>

<!-- ===== boy ===== -->
<!-- raised arm -->
<path fill="#b37f5b" d="M553,160.5 C548.5,157 543.5,152.5 540.4,148 C539,147.8 537.6,147 536.8,145.4 C535.9,143.9 535.5,141.9 536.1,140.9 L537.7,142.4 L537.7,139.9 L539.1,142 L540.5,141 L541.2,144.4 C544,148.4 549,152.6 555,155.5 Z"/>
<!-- other arm -->
<path fill="#b37f5b" d="M582.5,170 C586,175 589.5,181 592,186 C593,188 593,190 592,190.6 C590.5,190.4 589.5,188.5 589.3,187 C586.5,182.5 583.5,178 580.5,174 Z"/>
<!-- legs -->
<path fill="#b37f5b" d="M557.5,204 L564,204 L563,230 L558.3,230 Z"/>
<path fill="#b37f5b" d="M571,204 L578,204 L577.3,229 L572.8,229 Z"/>
<!-- shoes -->
<path fill="#f8d11c" d="M557.5,228.5 L563.2,228.5 L563.3,233 C562,234.8 557,235.6 552,235.6 C550.6,235.4 550.8,234 552,233.4 C554,232.4 556.5,230.5 557.5,228.5 Z"/>
<path fill="#f8d11c" d="M572.5,227.5 L577.6,227.5 C579,229 580.3,231 580.6,232.6 C580.6,233.8 579,234.2 577,234.2 L571.6,234.2 C570.6,233.6 570.8,232.4 571.4,231.6 Z"/>
<!-- shorts -->
<path fill="#f8d11c" d="M554.6,187.5 L580,187.5 L581,205.5 L569.6,206.5 L567.6,197 L565.6,206.5 L553.6,206 Z"/>
<!-- shirt -->
<path fill="#0d57a4" d="M558,155.5 C554.5,156 552,157.5 550.8,159.5 L553.6,164.8 L556.4,163.2 C556,171 555.4,180 555,189 L580.2,189 C580,182 579.8,176 579.6,170.5 L582.4,172.6 L585.6,168.6 C583.4,164 580.6,159.5 577,157 C575,155.8 572,155 569.6,154.6 C567,157 563,157.4 560.6,155 Z"/>
<!-- neck -->
<path fill="#b37f5b" d="M561.5,151 L569.5,151 L569.6,154.8 C567,157.6 563,157.4 560.8,155.2 Z"/>
<!-- face -->
<path fill="#b07a56" d="M559.2,142 C560,138.4 564,136.6 568.5,137 C572.6,137.4 574.6,140.4 574.4,144.4 C574.2,148.6 572.6,152.4 569,153.6 C565.4,154.6 561.4,153 560,149.6 C559.2,147.4 558.8,144.4 559.2,142 Z"/>
<ellipse cx="575" cy="146" rx="1.4" ry="2" fill="#b07a56"/>
<path fill="#f8d11c" d="M575.6,146 a1 1.4 0 1 0 0.01 0 Z"/>
<!-- hair -->
<path fill="#0b0b0b" d="M557,141.6 C556,138.6 556.6,135.4 559,133.6 C560.6,131.4 564,130.2 567,130.8 C569.6,129.8 573,130.6 575,132.4 C577.6,133 580,135 580.4,137.6 C581.4,139.6 580.8,142.4 579,143.6 C578.6,145.4 577,146.2 575.6,145.6 C575.4,143 574.6,141 573,140 C570,139.6 566.4,139.4 563.6,140.4 C561.6,141 560.2,142.6 559.6,144.6 C558.4,144.2 557.4,143 557,141.6 Z"/>
<path fill="#ffffff" d="M562.6,148 C564.4,149 567,149 568.6,148 C568,150.4 563.6,150.6 562.6,148 Z"/>
<circle cx="562.6" cy="144.2" r="0.55" fill="#221"/><circle cx="568" cy="144.4" r="0.55" fill="#221"/>
</g>
</svg>
<svg style="left:266px;top:257px" width="534" height="9"><rect x="0.80" y="0.00" width="533.20" height="8.60" fill="#1e1e1e"/></svg>
<span class="t" style="top:259px;font-size:5.2px;color:#a8a8a8;left:271.00px;transform:scaleX(0.879);transform-origin:left center;">(64.4%)</span>
<svg style="left:291.4px;top:260.6px;" width="3.4" height="2.2" viewBox="0 0 3.4 2.2"><path d="M0.2,0.2 L1.7,1.9 L3.2,0.2" stroke="#9a9a9a" stroke-width="0.6" fill="none"/></svg>
<svg style="left:301px;top:258px" width="33" height="7"><rect x="0.20" y="0.20" width="32.60" height="6.80" fill="#181818" rx="1.00"/></svg>
<span class="t" style="top:259px;font-size:5.2px;color:#a8a8a8;left:304.00px;transform:scaleX(0.907);transform-origin:left center;">Full</span>
<svg style="left:328.6px;top:260.6px;" width="3.4" height="2.2" viewBox="0 0 3.4 2.2"><path d="M0.2,0.2 L1.7,1.9 L3.2,0.2" stroke="#9a9a9a" stroke-width="0.6" fill="none"/></svg>
<svg style="left:339.49px;top:259.02px;" width="6.02" height="5.16" viewBox="0 0 7 6"><rect x="0.5" y="0.5" width="6" height="5" fill="none" stroke="#d0d0d0" stroke-width="0.8"/><path d="M2.2,1.6 L2.2,4.8 L3.2,4 L4,5.2 M2.2,1.6 L4.6,3.8" stroke="#d0d0d0" stroke-width="0.6" fill="none"/></svg>
<svg style="left:348.39px;top:259.02px;" width="6.02" height="5.16" viewBox="0 0 7 6"><rect x="0.5" y="0.8" width="6" height="4.4" fill="none" stroke="#3b8eea" stroke-width="0.9"/></svg>
<svg style="left:357.39px;top:259.02px;" width="6.02" height="5.16" viewBox="0 0 7 6"><path d="M0.5,5.5 V2 L2,0.5 H6.5 V5.5 Z" fill="none" stroke="#3b8eea" stroke-width="0.9"/></svg>
<svg style="left:366.19px;top:259.02px;" width="6.02" height="5.16" viewBox="0 0 7 6"><rect x="0.5" y="0.8" width="6" height="4.4" fill="none" stroke="#d0d0d0" stroke-width="0.8"/><rect x="2" y="2" width="3" height="2" fill="#d0d0d0"/></svg>
<svg style="left:374.59px;top:259.02px;" width="6.02" height="5.16" viewBox="0 0 7 6"><rect x="0.5" y="0.5" width="5.4" height="3.6" fill="none" stroke="#d0d0d0" stroke-width="0.8"/><path d="M4,4.2 L6.4,5.8" stroke="#d0d0d0" stroke-width="0.9"/></svg>
<svg style="left:386.79px;top:259.02px;" width="6.02" height="5.16" viewBox="0 0 7 6"><circle cx="3.5" cy="1.9" r="1.7" fill="#d04040"/><circle cx="2.2" cy="4" r="1.7" fill="#40b050"/><circle cx="4.8" cy="4" r="1.7" fill="#4070d0"/></svg>
<svg style="left:395.99px;top:259.02px;" width="6.02" height="5.16" viewBox="0 0 7 6"><g transform="translate(3.5 3)"><rect x="-0.6" y="-3" width="1.2" height="6" fill="#e0e0e0" transform="rotate(0)"/><rect x="-0.6" y="-3" width="1.2" height="6" fill="#e0e0e0" transform="rotate(45)"/><rect x="-0.6" y="-3" width="1.2" height="6" fill="#e0e0e0" transform="rotate(90)"/><rect x="-0.6" y="-3" width="1.2" height="6" fill="#e0e0e0" transform="rotate(135)"/><circle r="2" fill="#e0e0e0"/><circle r="0.9" fill="#1f1f1f"/></g></svg>
<span class="t" style="top:259px;font-size:5.2px;color:#3b8eea;left:404.40px;transform:scaleX(0.779);transform-origin:left center;">+0.0</span>
<svg style="left:421.59px;top:259.02px;" width="6.02" height="5.16" viewBox="0 0 7 6"><path d="M0.3,1.4 H2 L2.6,0.5 H4.4 L5,1.4 H6.7 V5.6 H0.3 Z" fill="#d8d8d8"/><circle cx="3.5" cy="3.4" r="1.2" fill="#1f1f1f"/></svg>
<svg style="left:430.39px;top:259.02px;" width="6.02" height="5.16" viewBox="0 0 7 6"><path d="M1,5 L5.4,0.8 M2.6,5.4 A1.6,1.6 0 0 1 0.6,3.4" stroke="#3c3c3c" stroke-width="0.8" fill="none"/></svg>
<svg style="left:441px;top:258px" width="29" height="7"><rect x="0.00" y="0.40" width="29.00" height="6.40" fill="#1a1a1a" rx="1.00"/></svg>
<span class="t" style="top:258.85px;font-size:5px;color:#7e7e7e;left:443.40px;transform:scaleX(1.016);transform-origin:left center;">0:00:05:07</span>

<!-- ===== character panel ===== -->
<span class="t" style="top:293px;font-size:5.8px;color:#c4c4c4;left:5.60px;transform:scaleX(0.699);transform-origin:left center;">Character</span>
<svg style="left:28.6px;top:293.8px;" width="3.8" height="3.4" viewBox="0 0 3.8 3.4"><path d="M0.3,0.5 H3.5 M0.3,1.75 H3.5 M0.3,3 H3.5" stroke="#8e8e8e" stroke-width="0.5"/></svg>
<svg style="left:3px;top:306px" width="41" height="8"><rect x="0.00" y="0.00" width="40.40" height="7.40" fill="#171717" rx="1.00"/></svg>
<span class="t" style="top:308px;font-size:5.4px;color:#c8c8c8;left:5.00px;transform:scaleX(0.852);transform-origin:left center;">Montserrat</span>
<svg style="left:45.2px;top:308.7px;" width="3.6" height="2.2" viewBox="0 0 3.6 2.2"><path d="M0.2,0.2 L1.8,1.9 L3.4,0.2" stroke="#9a9a9a" stroke-width="0.6" fill="none"/></svg>
<svg style="left:3px;top:315px" width="41" height="8"><rect x="0.00" y="0.60" width="40.40" height="7.40" fill="#171717" rx="1.00"/></svg>
<span class="t" style="top:317px;font-size:5.4px;color:#c8c8c8;left:5.00px;transform:scaleX(0.833);transform-origin:left center;">Bold</span>
<svg style="left:45.2px;top:318.3px;" width="3.6" height="2.2" viewBox="0 0 3.6 2.2"><path d="M0.2,0.2 L1.8,1.9 L3.4,0.2" stroke="#9a9a9a" stroke-width="0.6" fill="none"/></svg>
<svg style="left:52.6px;top:306.4px;" width="7" height="7" viewBox="0 0 7 7"><path d="M0.4,6.6 L0.8,5 L4,1.8 L5.2,3 L2,6.2 Z" fill="#d8d8d8"/><path d="M4.2,1 L6,2.8 L6.6,0.4 Z" fill="#d8d8d8"/></svg>
<svg style="left:66.4px;top:310.8px;" width="11.6" height="11.4" viewBox="0 0 11.6 11.4"><rect x="0" y="0" width="11.6" height="11.4" fill="#f4f4f4"/><rect x="2.6" y="2.6" width="6.4" height="6.2" fill="#101010"/><path d="M0.4,11 L11.2,0.4" stroke="#e02020" stroke-width="0.9"/></svg>
<svg style="left:61px;top:306px" width="13" height="11"><rect x="1.00" y="0.40" width="11.20" height="9.80" fill="#fdfdfd" stroke="#bdbdbd" stroke-width="0.4"/></svg>
<svg style="left:74.6px;top:306.2px;" width="3.6" height="3.6" viewBox="0 0 3.6 3.6"><path d="M0.4,0.8 H2.8 V3.2" stroke="#d0d0d0" stroke-width="0.6" fill="none"/><path d="M0,0.8 L1.2,0 V1.6 Z M2.8,3.6 L2,2.4 H3.6 Z" fill="#d0d0d0"/></svg>
<svg style="left:52px;top:316.2px;" width="8.4" height="6.4" viewBox="0 0 8.4 6.4"><rect x="0.3" y="0.3" width="7.8" height="5.8" fill="#f0f0f0"/><rect x="0.9" y="0.9" width="6.6" height="2.2" fill="#0c0c0c"/></svg>
<svg style="left:62.2px;top:318.4px;" width="3" height="3" viewBox="0 0 3 3"><rect x="0.3" y="0.3" width="2.4" height="2.4" fill="#eee" stroke="#555" stroke-width="0.4"/><path d="M0.3,2.7 L2.7,0.3" stroke="#d22" stroke-width="0.5"/></svg>
<span class="t" style="top:329px;font-size:5.4px;color:#d6d6d6;font-weight:bold;left:2.20px;">T</span>
<span class="t" style="top:327px;font-size:7.4px;color:#d6d6d6;font-weight:bold;left:5.00px;">T</span>
<span class="t" style="top:328px;font-size:5.4px;color:#3b8eea;left:12.00px;transform:scaleX(0.832);transform-origin:left center;">80</span>
<span class="t" style="top:328px;font-size:5.4px;color:#8e8e8e;left:17.60px;transform:scaleX(0.701);transform-origin:left center;">px</span>
<svg style="left:29.8px;top:329.3px;" width="2.6" height="1.8" viewBox="0 0 2.6 1.8"><path d="M0,0 H2.6 L1.3,1.8 Z" fill="#c0c0c0"/></svg>
<svg style="left:44px;top:326.6px;" width="7" height="7.2" viewBox="0 0 7 7.2"><path d="M3.5,0.2 L4.8,1.6 H2.2 Z M3.5,3 L4.8,1.6 H2.2 Z" fill="#d6d6d6"/><path d="M0.6,7 L2.2,3.2 L3.8,7 M1.2,5.8 H3.2 M4.4,7 L5.6,4.2 L6.8,7" stroke="#d6d6d6" stroke-width="0.7" fill="none"/></svg>
<span class="t" style="top:328px;font-size:5.4px;color:#3b8eea;left:56.40px;transform:scaleX(0.864);transform-origin:left center;">Auto</span>
<svg style="left:74px;top:329.3px;" width="2.6" height="1.8" viewBox="0 0 2.6 1.8"><path d="M0,0 H2.6 L1.3,1.8 Z" fill="#c0c0c0"/></svg>
<span class="t" style="top:336px;font-size:5.6px;color:#d6d6d6;font-weight:bold;left:2.40px;">V</span>
<span class="t" style="top:337px;font-size:5.6px;color:#d6d6d6;font-weight:bold;left:5.40px;">A</span>
<span class="t" style="top:336px;font-size:5.4px;color:#5e5e5e;left:12.00px;transform:scaleX(0.805);transform-origin:left center;">Metrics</span>
<svg style="left:29.8px;top:337.3px;" width="2.6" height="1.8" viewBox="0 0 2.6 1.8"><path d="M0,0 H2.6 L1.3,1.8 Z" fill="#c0c0c0"/></svg>
<svg style="left:44px;top:335.2px;" width="7.4" height="6.4" viewBox="0 0 7.4 6.4"><rect x="0.3" y="0.3" width="6.8" height="3.6" fill="none" stroke="#d6d6d6" stroke-width="0.6"/><path d="M1.4,3.2 L2.2,1 L3,3.2 M4,1 L4.8,3.2 L5.6,1" stroke="#d6d6d6" stroke-width="0.5" fill="none"/><path d="M0.4,5.4 H7 M0.4,4.6 V6.2 M7,4.6 V6.2" stroke="#d6d6d6" stroke-width="0.5"/></svg>
<span class="t" style="top:336px;font-size:5.4px;color:#3b8eea;left:56.80px;">0</span>
<svg style="left:74px;top:337.3px;" width="2.6" height="1.8" viewBox="0 0 2.6 1.8"><path d="M0,0 H2.6 L1.3,1.8 Z" fill="#c0c0c0"/></svg>
<svg style="left:2.8px;top:347px;" width="6.6" height="5.6" viewBox="0 0 6.6 5.6"><path d="M0,0.5 H6.6" stroke="#d6d6d6" stroke-width="0.6"/><path d="M0,2.6 H6.6" stroke="#d6d6d6" stroke-width="1"/><path d="M0,4.9 H6.6" stroke="#d6d6d6" stroke-width="1.4"/></svg>
<span class="t" style="top:348px;font-size:5.4px;color:#8e8e8e;left:12.00px;transform:scaleX(0.889);transform-origin:left center;">- px</span>
<svg style="left:29.8px;top:348.9px;" width="2.6" height="1.8" viewBox="0 0 2.6 1.8"><path d="M0,0 H2.6 L1.3,1.8 Z" fill="#c0c0c0"/></svg>
<svg style="left:35px;top:346px" width="44" height="8"><rect x="0.00" y="0.00" width="43.40" height="7.60" fill="#1a1a1a" rx="1.00"/></svg>
<svg style="left:73.4px;top:348.7px;" width="3.6" height="2.2" viewBox="0 0 3.6 2.2"><path d="M0.2,0.2 L1.8,1.9 L3.4,0.2" stroke="#6a6a6a" stroke-width="0.6" fill="none"/></svg>
<span class="t" style="top:357.95px;font-size:7px;color:#d6d6d6;font-weight:bold;left:2.60px;">I</span>
<span class="t" style="top:357.95px;font-size:7px;color:#d6d6d6;font-weight:bold;left:4.80px;">T</span>
<span class="t" style="top:360px;font-size:5.4px;color:#3b8eea;left:12.00px;transform:scaleX(0.821);transform-origin:left center;">100</span>
<span class="t" style="top:360px;font-size:5.4px;color:#8e8e8e;left:20.20px;transform:scaleX(0.833);transform-origin:left center;">%</span>
<svg style="left:29.8px;top:360.9px;" width="2.6" height="1.8" viewBox="0 0 2.6 1.8"><path d="M0,0 H2.6 L1.3,1.8 Z" fill="#c0c0c0"/></svg>
<span class="t" style="top:357.35px;font-size:7px;color:#d6d6d6;font-weight:bold;left:45.00px;">T</span>
<svg style="left:44.4px;top:364.2px;" width="6.4" height="1.6" viewBox="0 0 6.4 1.6"><path d="M0.4,0.8 H6 M0.4,0 V1.6 M6,0 V1.6" stroke="#d6d6d6" stroke-width="0.5"/></svg>
<span class="t" style="top:360px;font-size:5.4px;color:#3b8eea;left:56.00px;transform:scaleX(0.821);transform-origin:left center;">100</span>
<span class="t" style="top:360px;font-size:5.4px;color:#8e8e8e;left:64.20px;transform:scaleX(0.833);transform-origin:left center;">%</span>
<svg style="left:74px;top:360.9px;" width="2.6" height="1.8" viewBox="0 0 2.6 1.8"><path d="M0,0 H2.6 L1.3,1.8 Z" fill="#c0c0c0"/></svg>
<span class="t" style="top:369px;font-size:5.6px;color:#d6d6d6;font-weight:bold;left:2.40px;">A</span>
<span class="t" style="top:366.65px;font-size:5px;color:#d6d6d6;font-weight:bold;left:6.00px;">a</span>
<svg style="left:5.6px;top:370.6px;" width="3.6" height="2.8" viewBox="0 0 3.6 2.8"><path d="M1.8,0 V2.6 M0.4,1.4 L1.8,2.8 L3.2,1.4" stroke="#d6d6d6" stroke-width="0.5" fill="none"/></svg>
<span class="t" style="top:368px;font-size:5.4px;color:#3b8eea;left:12.00px;">0</span>
<span class="t" style="top:368px;font-size:5.4px;color:#8e8e8e;left:15.60px;transform:scaleX(0.701);transform-origin:left center;">px</span>
<svg style="left:29.8px;top:369.3px;" width="2.6" height="1.8" viewBox="0 0 2.6 1.8"><path d="M0,0 H2.6 L1.3,1.8 Z" fill="#c0c0c0"/></svg>
<svg style="left:44.4px;top:367.2px;" width="6.4" height="6.2" viewBox="0 0 6.4 6.2"><path d="M1,0.4 H5.4 M3.2,0.4 V3.6 M1.4,2 H5 M1.2,3.6 C2,4.6 4.4,4.6 5.2,3.6" stroke="#d6d6d6" stroke-width="0.5" fill="none"/><path d="M0.4,5.6 H6 M0.4,5 V6.2 M6,5 V6.2" stroke="#d6d6d6" stroke-width="0.5"/></svg>
<span class="t" style="top:368px;font-size:5.4px;color:#3b8eea;left:56.00px;">0</span>
<span class="t" style="top:368px;font-size:5.4px;color:#8e8e8e;left:59.80px;transform:scaleX(0.833);transform-origin:left center;">%</span>
<svg style="left:74px;top:369.3px;" width="2.6" height="1.8" viewBox="0 0 2.6 1.8"><path d="M0,0 H2.6 L1.3,1.8 Z" fill="#c0c0c0"/></svg>
<svg style="left:3px;top:377px" width="76" height="1"><rect x="0.00" y="0.20" width="75.60" height="0.50" fill="#303030"/></svg>
<span class="t" style="top:380px;font-size:7.2px;color:#e0e0e0;font-weight:bold;left:13.40px;">T</span>
<span class="t" style="top:380px;font-size:7.2px;color:#e0e0e0;font-weight:bold;font-style:italic;left:23.00px;">T</span>
<span class="t" style="top:380px;font-size:7.2px;color:#e0e0e0;font-weight:bold;left:33.00px;transform:scaleX(0.841);transform-origin:left center;">TT</span>
<span class="t" style="top:380px;font-size:7.2px;color:#e0e0e0;font-weight:bold;left:43.20px;">T</span>
<span class="t" style="top:382px;font-size:5.4px;color:#e0e0e0;font-weight:bold;left:47.00px;">T</span>
<span class="t" style="top:380px;font-size:7.2px;color:#e0e0e0;font-weight:bold;left:55.00px;">T</span>
<span class="t" style="top:379.8px;font-size:4px;color:#e0e0e0;font-weight:bold;left:58.80px;">1</span>
<span class="t" style="top:380px;font-size:7.2px;color:#e0e0e0;font-weight:bold;left:65.00px;">T</span>
<span class="t" style="top:382.8px;font-size:4px;color:#e0e0e0;font-weight:bold;left:68.80px;">1</span>
<svg style="left:4.8px;top:391px;" width="5.2" height="5.2" viewBox="0 0 5.2 5.2"><rect x="0.4" y="0.4" width="4.4" height="4.4" rx="0.6" fill="none" stroke="#8a8a8a" stroke-width="0.7"/></svg>
<span class="t" style="top:391px;font-size:5.4px;color:#727272;left:11.80px;transform:scaleX(0.783);transform-origin:left center;">Ligatures</span>
<svg style="left:43.4px;top:391px;" width="5.2" height="5.2" viewBox="0 0 5.2 5.2"><rect x="0.4" y="0.4" width="4.4" height="4.4" rx="0.6" fill="none" stroke="#8a8a8a" stroke-width="0.7"/></svg>
<span class="t" style="top:391px;font-size:5.4px;color:#727272;left:50.20px;transform:scaleX(0.798);transform-origin:left center;">Hindi Digits</span>

<!-- ===== timeline panel ===== -->
<svg style="left:274.4px;top:275px;" width="2" height="2" viewBox="0 0 2 2"><path d="M0.2,0.2 L1.8,1.8 M1.8,0.2 L0.2,1.8" stroke="#7a7a7a" stroke-width="0.5"/></svg>
<svg style="left:280.2px;top:273.8px;" width="4.4" height="4.2" viewBox="0 0 4.4 4.2"><rect width="4.4" height="4.2" fill="#cbb98a"/><path d="M0,1.2 H4.4 M2.2,1.2 V4.2 M0,2.8 H4.4" stroke="#8a7a50" stroke-width="0.35"/></svg>
<span class="t" style="top:274px;font-size:5.6px;color:#c8c8c8;left:289.80px;transform:scaleX(0.774);transform-origin:left center;">SF Subtitle</span>
<svg style="left:315.4px;top:274.4px;" width="3.8" height="3.4" viewBox="0 0 3.8 3.4"><path d="M0.3,0.5 H3.5 M0.3,1.75 H3.5 M0.3,3 H3.5" stroke="#8e8e8e" stroke-width="0.5"/></svg>
<span class="t" style="top:283.95px;font-size:7px;color:#3d94f0;font-weight:bold;left:277.00px;transform:scaleX(0.858);transform-origin:left center;">0:00:05:07</span>
<span class="t" style="top:293px;font-size:4.4px;color:#2a66a8;left:277.00px;transform:scaleX(0.852);transform-origin:left center;">00132 (25.00 fps)</span>
<svg style="left:313px;top:286px" width="254" height="9"><rect x="0.60" y="0.60" width="252.60" height="7.60" fill="#141414" rx="1.00"/></svg>
<svg style="left:316px;top:287.8px;" width="7" height="5" viewBox="0 0 7 5"><circle cx="2.2" cy="2" r="1.5" fill="none" stroke="#d0d0d0" stroke-width="0.7"/><path d="M1.2,3.1 L0.2,4.6 M4.6,3.6 l1.8,0" stroke="#d0d0d0" stroke-width="0.7"/></svg>
<svg style="left:574px;top:287.8px;" width="6.4" height="5.2" viewBox="0 0 6.4 5.2"><path d="M0.2,1.2 H2.4 L4,3.6 H6.2 M4,0.6 H6.2 M4.6,0 L6.2,0.6 L4.6,1.4 M4.6,3 L6.2,3.6 L4.6,4.4" stroke="#d0d0d0" stroke-width="0.6" fill="none"/></svg>
<svg style="left:587px;top:287.6px;" width="6.4" height="5.6" viewBox="0 0 6.4 5.6"><rect x="0.3" y="2.4" width="5.8" height="3" fill="#d0d0d0"/><path d="M1.6,2.4 V1.2 H4.8 V2.4" stroke="#d0d0d0" stroke-width="0.7" fill="none"/><path d="M3.2,2.4 V5.4" stroke="#333" stroke-width="0.5"/></svg>
<svg style="left:597.4px;top:287.6px;" width="5.8" height="5.8" viewBox="0 0 5.8 5.8"><rect x="1.4" y="0.2" width="4.2" height="4.2" fill="#d0d0d0"/><rect x="0.2" y="1.4" width="4.2" height="4.2" fill="#9a9a9a" stroke="#232323" stroke-width="0.4"/></svg>
<svg style="left:607.4px;top:287.6px;" width="6.4" height="5.6" viewBox="0 0 6.4 5.6"><ellipse cx="3.2" cy="2.8" rx="3.2" ry="1.6" transform="rotate(-35 3.2 2.8)" fill="none" stroke="#d0d0d0" stroke-width="0.8"/><path d="M0.8,5.2 L5.6,0.4" stroke="#d0d0d0" stroke-width="0.5"/></svg>
<svg style="left:620px;top:287.6px;" width="7" height="5.8" viewBox="0 0 7 5.8"><rect x="0.4" y="1" width="6" height="4.4" fill="none" stroke="#d0d0d0" stroke-width="0.7"/><path d="M2.2,1 V0.2 M4.6,1 V0.2 M3.4,2.4 V4.2 M2.4,3.3 H4.4" stroke="#d0d0d0" stroke-width="0.6"/></svg>
<svg style="left:270px;top:298px" width="364" height="8"><rect x="0.00" y="0.40" width="364.00" height="7.20" fill="#222"/></svg>
<svg style="left:273px;top:300.4px;" width="4.6" height="3.2" viewBox="0 0 4.6 3.2"><path d="M0.2,1.6 C1.2,0 3.4,0 4.4,1.6 C3.4,3.2 1.2,3.2 0.2,1.6 Z" fill="#dcdcdc"/><circle cx="2.3" cy="1.6" r="0.8" fill="#222"/></svg>
<svg style="left:279.4px;top:300.1px;" width="4.4" height="3.8" viewBox="0 0 4.4 3.8"><path d="M0.2,1.2 H1.2 L2.4,0.2 V3.6 L1.2,2.6 H0.2 Z" fill="#dcdcdc"/><path d="M3,0.8 A1.6,1.6 0 0 1 3,3" stroke="#dcdcdc" stroke-width="0.5" fill="none"/></svg>
<svg style="left:286px;top:300.8px;" width="2.4" height="2.4" viewBox="0 0 2.4 2.4"><circle cx="1.2" cy="1.2" r="1.1" fill="#dcdcdc"/></svg>
<svg style="left:292px;top:299.8px;" width="3.6" height="4.4" viewBox="0 0 3.6 4.4"><rect x="0.2" y="1.8" width="3.2" height="2.4" fill="#dcdcdc"/><path d="M0.8,1.8 V1.2 A1,1 0 0 1 2.8,1.2 V1.8" stroke="#dcdcdc" stroke-width="0.5" fill="none"/></svg>
<svg style="left:303.6px;top:300px;" width="5.2" height="4" viewBox="0 0 5.2 4"><path d="M0.2,0.2 H2.6 L5,2.4 L3.2,3.8 L0.2,1.8 Z" fill="#a8a8a8"/></svg>
<span class="t" style="top:301px;font-size:4.6px;color:#747474;left:313.40px;">#</span>
<span class="t" style="top:301px;font-size:4.6px;color:#747474;left:327.60px;transform:scaleX(0.702);transform-origin:left center;">Layer Name</span>
<span class="t" style="top:301px;font-size:4.6px;color:#747474;left:424.40px;transform:scaleX(0.695);transform-origin:left center;">Mode</span>
<span class="t" style="top:301px;font-size:4.6px;color:#747474;left:451.60px;">T</span>
<span class="t" style="top:301px;font-size:4.6px;color:#747474;left:459.00px;transform:scaleX(0.780);transform-origin:left center;">Track Matte</span>
<svg style="left:491.2px;top:299.8px;" width="4.6" height="4.4" viewBox="0 0 4.6 4.4"><rect x="0.2" y="0.2" width="4.2" height="4" fill="#dcdcdc"/><rect x="1.4" y="1.3" width="1.8" height="1.8" fill="#222"/></svg>
<svg style="left:496.8px;top:299.8px;" width="4.8" height="4.4" viewBox="0 0 4.8 4.4"><rect x="1.2" y="0.2" width="3.4" height="2.8" fill="none" stroke="#dcdcdc" stroke-width="0.6"/><rect x="0.2" y="1.4" width="2.8" height="2.8" fill="#dcdcdc"/></svg>
<svg style="left:503.2px;top:300px;" width="4.8" height="4" viewBox="0 0 4.8 4"><path d="M2.4,0.2 V1.4 M0.4,3.4 C0.6,1.6 4.2,1.6 4.4,3.4 Z" fill="#dcdcdc" stroke="#dcdcdc" stroke-width="0.5"/></svg>
<svg style="left:510.4px;top:300px;" width="4" height="4" viewBox="0 0 4 4"><path d="M2,0 L2.5,1.5 L4,2 L2.5,2.5 L2,4 L1.5,2.5 L0,2 L1.5,1.5 Z" fill="#dcdcdc"/></svg>
<svg style="left:516.8px;top:300px;" width="4" height="4" viewBox="0 0 4 4"><path d="M0.3,0.3 L3.7,3.7" stroke="#dcdcdc" stroke-width="0.8"/></svg>
<span class="t" style="top:299.65px;font-size:5px;color:#dcdcdc;font-style:italic;left:522.60px;">fx</span>
<svg style="left:528.2px;top:300px;" width="4.8" height="4" viewBox="0 0 4.8 4"><rect x="0.2" y="0.2" width="4.4" height="3.6" fill="#dcdcdc"/><path d="M1,1.2 H3.8 M1,2.2 H3.8" stroke="#333" stroke-width="0.4"/></svg>
<svg style="left:534.4px;top:299.8px;" width="4.4" height="4.4" viewBox="0 0 4.4 4.4"><circle cx="2.2" cy="2.2" r="1.8" fill="none" stroke="#dcdcdc" stroke-width="0.6"/><path d="M0.8,3.6 L3.6,0.8" stroke="#dcdcdc" stroke-width="0.5"/></svg>
<svg style="left:540.6px;top:299.8px;" width="4.4" height="4.4" viewBox="0 0 4.4 4.4"><circle cx="2.2" cy="2.2" r="1.9" fill="#dcdcdc"/><path d="M2.2,0.3 A1.9,1.9 0 0 1 2.2,4.1 Z" fill="#444"/></svg>
<svg style="left:546.8px;top:300px;" width="4" height="4" viewBox="0 0 4 4"><path d="M2,0.2 L3.8,1.1 V2.9 L2,3.8 L0.2,2.9 V1.1 Z" fill="none" stroke="#8a8a8a" stroke-width="0.5"/></svg>
<span class="t" style="top:301px;font-size:4.6px;color:#747474;left:560.00px;transform:scaleX(0.746);transform-origin:left center;">Parent &amp; Link</span>
<span class="t" style="top:301px;font-size:4.6px;color:#747474;left:605.40px;transform:scaleX(0.755);transform-origin:left center;">Stretch</span>
<svg style="left:270px;top:305px" width="364" height="1"><rect x="0.00" y="0.40" width="364.00" height="0.50" fill="#1a1a1a"/></svg>
<svg style="left:270px;top:305px" width="364" height="7"><rect x="0.00" y="0.80" width="364.00" height="6.00" fill="#2c2c2c"/></svg>
<svg style="left:273px;top:307.2px;" width="4.6" height="3.2" viewBox="0 0 4.6 3.2"><path d="M0.2,1.6 C1.2,0 3.4,0 4.4,1.6 C3.4,3.2 1.2,3.2 0.2,1.6 Z" fill="#dcdcdc"/><circle cx="2.3" cy="1.6" r="0.8" fill="#222"/></svg>
<svg style="left:279.4px;top:306.9px;" width="4.4" height="3.8" viewBox="0 0 4.4 3.8"><path d="M0.2,1.2 H1.2 L2.4,0.2 V3.6 L1.2,2.6 H0.2 Z" fill="#dcdcdc"/><path d="M3,0.8 A1.6,1.6 0 0 1 3,3" stroke="#dcdcdc" stroke-width="0.5" fill="none"/></svg>
<svg style="left:291px;top:306px" width="5" height="6"><rect x="0.00" y="0.20" width="5.00" height="5.20" fill="#252525"/></svg>
<svg style="left:285px;top:306px" width="5" height="6"><rect x="0.00" y="0.20" width="5.00" height="5.20" fill="#252525"/></svg>
<svg style="left:300.6px;top:307.8px;" width="3" height="2.2" viewBox="0 0 3 2.2"><path d="M0.2,0.3 L1.5,1.9 L2.8,0.3" stroke="#686868" stroke-width="0.6" fill="none"/></svg>
<svg style="left:304px;top:306px" width="6" height="6"><rect x="0.80" y="0.40" width="4.40" height="4.80" fill="#a9d6cd"/></svg>
<span class="t" style="top:307px;font-size:5.2px;color:#c8c8c8;left:313.20px;">1</span>
<svg style="left:326px;top:306.2px;" width="4.6" height="5.2" viewBox="0 0 4.6 5.2"><path d="M2.3,0.2 L3.4,3.6 H1.2 Z" fill="#f08a1e"/><path d="M0.6,3.8 H4 L4.4,5 H0.2 Z" fill="#f08a1e"/><path d="M1.7,2 H2.9" stroke="#fff" stroke-width="0.5"/></svg>
<span class="t" style="top:307px;font-size:5.4px;color:#e4e4e4;font-weight:bold;left:332.00px;transform:scaleX(0.778);transform-origin:left center;">[CDF222...n Sever Plus_16x9_FINAL.mp4]</span>
<span class="t" style="top:307px;font-size:5.2px;color:#c8c8c8;left:424.40px;transform:scaleX(0.800);transform-origin:left center;">Normal</span>
<svg style="left:441.6px;top:307.8px;" width="3.2" height="2.2" viewBox="0 0 3.2 2.2"><path d="M0.2,0.3 L1.6,1.9 L3,0.3" stroke="#9a9a9a" stroke-width="0.6" fill="none"/></svg>
<svg style="left:448px;top:306px" width="6" height="6"><rect x="0.00" y="0.20" width="5.40" height="5.20" fill="#252525"/></svg>
<svg style="left:457.6px;top:306.8px;" width="5" height="4" viewBox="0 0 5 4"><path d="M2.5,0.4 A1.6,1.6 0 1 0 2.5,3.6 A1.6,1.6 0 1 0 2.5,0.4 M4.2,2 C4.8,2.6 4.6,3.8 3.6,3.8" stroke="#c8c8c8" stroke-width="0.6" fill="none"/></svg>
<span class="t" style="top:307px;font-size:5.2px;color:#c8c8c8;left:465.80px;transform:scaleX(0.825);transform-origin:left center;">No Matte</span>
<svg style="left:485px;top:307.8px;" width="3.2" height="2.2" viewBox="0 0 3.2 2.2"><path d="M0.2,0.3 L1.6,1.9 L3,0.3" stroke="#9a9a9a" stroke-width="0.6" fill="none"/></svg>
<svg style="left:491px;top:306px" width="12" height="6"><rect x="0.00" y="0.20" width="12.00" height="5.20" fill="#292929"/></svg>
<svg style="left:503.2px;top:306.8px;" width="4.8" height="4" viewBox="0 0 4.8 4"><path d="M2.4,0.2 V1.4 M0.4,3.4 C0.6,1.6 4.2,1.6 4.4,3.4 Z" fill="#dcdcdc" stroke="#dcdcdc" stroke-width="0.5"/></svg>
<svg style="left:516.8px;top:306.8px;" width="4" height="4" viewBox="0 0 4 4"><path d="M0.3,3.7 L3.7,0.3" stroke="#dcdcdc" stroke-width="0.8"/></svg>
<svg style="left:522px;top:306px" width="5" height="6"><rect x="0.40" y="0.20" width="4.60" height="5.20" fill="#3a3230"/></svg>
<svg style="left:528px;top:306px" width="5" height="6"><rect x="0.40" y="0.20" width="4.60" height="5.20" fill="#262626"/></svg>
<svg style="left:534px;top:306px" width="5" height="6"><rect x="0.40" y="0.20" width="4.60" height="5.20" fill="#262626"/></svg>
<svg style="left:540px;top:306px" width="5" height="6"><rect x="0.40" y="0.20" width="4.60" height="5.20" fill="#262626"/></svg>
<svg style="left:546px;top:306px" width="5" height="6"><rect x="0.40" y="0.20" width="4.60" height="5.20" fill="#262626"/></svg>
<svg style="left:558.6px;top:306.8px;" width="5" height="4" viewBox="0 0 5 4"><path d="M2.5,0.4 A1.6,1.6 0 1 0 2.5,3.6 A1.6,1.6 0 1 0 2.5,0.4 M4.2,2 C4.8,2.6 4.6,3.8 3.6,3.8" stroke="#c8c8c8" stroke-width="0.6" fill="none"/></svg>
<svg style="left:565px;top:306px" width="36" height="6"><rect x="0.60" y="0.00" width="34.60" height="5.60" fill="#1d1d1d"/></svg>
<span class="t" style="top:307px;font-size:5.2px;color:#c8c8c8;left:568.60px;transform:scaleX(0.804);transform-origin:left center;">None</span>
<svg style="left:596.6px;top:307.8px;" width="3.2" height="2.2" viewBox="0 0 3.2 2.2"><path d="M0.2,0.3 L1.6,1.9 L3,0.3" stroke="#9a9a9a" stroke-width="0.6" fill="none"/></svg>
<span class="t" style="top:307px;font-size:5.2px;color:#3b8eea;left:605.60px;transform:scaleX(0.816);transform-origin:left center;">100.0%</span>
<svg style="left:307.6px;top:314.3px;" width="2.2" height="3" viewBox="0 0 2.2 3"><path d="M0.3,0.2 L1.9,1.5 L0.3,2.8" stroke="#666" stroke-width="0.6" fill="none"/></svg>
<span class="t" style="top:314px;font-size:5.2px;color:#a8a8a8;left:312.80px;transform:scaleX(0.809);transform-origin:left center;">Transform</span>
<span class="t" style="top:313px;font-size:5.2px;color:#3b8eea;left:505.00px;transform:scaleX(0.751);transform-origin:left center;">Reset</span>
<svg style="left:307px;top:321.4px;" width="3" height="2.2" viewBox="0 0 3 2.2"><path d="M0.2,0.3 L1.5,1.9 L2.8,0.3" stroke="#686868" stroke-width="0.6" fill="none"/></svg>
<span class="t" style="top:320px;font-size:5.2px;color:#a8a8a8;left:312.80px;transform:scaleX(0.857);transform-origin:left center;">Audio</span>
<svg style="left:319.4px;top:326.4px;" width="4.4" height="5.2" viewBox="0 0 4.4 5.2"><circle cx="2.2" cy="3" r="1.8" fill="none" stroke="#c8c8c8" stroke-width="0.6"/><path d="M1.4,0.4 H3 M2.2,0.4 V1.2" stroke="#c8c8c8" stroke-width="0.6"/></svg>
<span class="t" style="top:327px;font-size:5.2px;color:#a8a8a8;left:326.00px;transform:scaleX(0.840);transform-origin:left center;">Audio Levels</span>
<span class="t" style="top:326px;font-size:5.2px;color:#3b8eea;left:504.60px;transform:scaleX(0.790);transform-origin:left center;">+0.00</span>
<span class="t" style="top:326px;font-size:5.2px;color:#8a8a8a;left:515.60px;transform:scaleX(0.786);transform-origin:left center;">dB</span>
<svg style="left:563.6px;top:326.4px;" width="4.4" height="4.2" viewBox="0 0 4.4 4.2"><circle cx="2.2" cy="2.2" r="1.7" fill="none" stroke="#a8a8a8" stroke-width="0.6"/><path d="M2.2,0.4 V2.2" stroke="#a8a8a8" stroke-width="0.6"/></svg>
<svg style="left:314px;top:335px;" width="3" height="2.2" viewBox="0 0 3 2.2"><path d="M0.2,0.3 L1.5,1.9 L2.8,0.3" stroke="#686868" stroke-width="0.6" fill="none"/></svg>
<span class="t" style="top:334px;font-size:5.2px;color:#a8a8a8;left:320.00px;transform:scaleX(0.834);transform-origin:left center;">Waveform</span>
<span class="t" style="top:350px;font-size:5.2px;color:#a8a8a8;left:327.00px;transform:scaleX(0.834);transform-origin:left center;">Waveform</span>
<svg style="left:270px;top:364px" width="365" height="2"><rect x="0.20" y="0.80" width="364.00" height="0.60" fill="#1d1d1d"/></svg>
<svg style="left:270px;top:414px" width="364" height="8"><rect x="0.00" y="0.60" width="364.00" height="7.40" fill="#1f1f1f"/></svg>
<svg style="left:274px;top:416.4px;" width="4" height="4" viewBox="0 0 4 4"><circle cx="2" cy="2" r="1.6" fill="none" stroke="#2f74c8" stroke-width="0.7"/><circle cx="2" cy="2" r="0.6" fill="#2f74c8"/></svg>
<svg style="left:282.6px;top:416.4px;" width="4" height="4" viewBox="0 0 4 4"><circle cx="2" cy="2" r="1.6" fill="none" stroke="#2f74c8" stroke-width="0.7"/><circle cx="2" cy="2" r="0.6" fill="#2f74c8"/></svg>
<svg style="left:289.8px;top:416.4px;" width="4" height="4" viewBox="0 0 4 4"><circle cx="2" cy="2" r="1.6" fill="none" stroke="#2f74c8" stroke-width="0.7"/><circle cx="2" cy="2" r="0.6" fill="#2f74c8"/></svg>
<svg style="left:297.4px;top:416.6px;" width="3.6" height="3.8" viewBox="0 0 3.6 3.8"><path d="M0.2,1.2 L1,0.4 L1.4,1.2 L2,0.2 L2.6,1.2 L3.4,0.6 V3.6 H0.2 Z" fill="#d0d0d0"/></svg>
<span class="t" style="top:415.85px;font-size:5px;color:#a8a8a8;left:313.60px;transform:scaleX(0.820);transform-origin:left center;">Frame Render Time:</span>
<span class="t" style="top:415.85px;font-size:5px;color:#35c9a5;left:353.60px;transform:scaleX(0.932);transform-origin:left center;">23ms</span>
<svg style="left:634px;top:285px" width="1" height="137"><rect x="0.00" y="0.00" width="0.60" height="137.00" fill="#171717"/></svg>
<svg style="left:634px;top:285px" width="162" height="14"><rect x="0.60" y="0.40" width="160.80" height="13.00" fill="#262626"/></svg>
<svg style="left:635px;top:286px" width="160" height="3"><rect x="0.40" y="0.40" width="159.40" height="2.60" fill="#6c6c6c" rx="1.30"/></svg>
<svg style="left:634px;top:285px" width="3" height="5"><rect x="0.60" y="0.80" width="1.80" height="3.60" fill="#3b8eea" rx="0.90"/></svg>
<svg style="left:794px;top:285px" width="2" height="5"><rect x="0.00" y="0.80" width="1.80" height="3.60" fill="#3b8eea" rx="0.90"/></svg>
<div class="a" style="left:634.8px;top:289px;width:161px;height:9px;overflow:hidden">
<span class="t" style="top:2px;font-size:4.2px;color:#8e8e8e;left:-4.30px;transform:scaleX(0.895);transform-origin:left center;">0:00s</span>
<svg style="left:0px;top:7px" width="1" height="2"><rect x="0.05" y="0.20" width="0.50" height="1.40" fill="#5c5c5c"/></svg>
<span class="t" style="top:2px;font-size:4.2px;color:#8e8e8e;left:19.52px;transform:scaleX(0.856);transform-origin:left center;">01s</span>
<svg style="left:22px;top:7px" width="1" height="2"><rect x="0.17" y="0.20" width="0.50" height="1.40" fill="#5c5c5c"/></svg>
<span class="t" style="top:2px;font-size:4.2px;color:#8e8e8e;left:41.64px;transform:scaleX(0.856);transform-origin:left center;">02s</span>
<svg style="left:44px;top:7px" width="1" height="2"><rect x="0.29" y="0.20" width="0.50" height="1.40" fill="#5c5c5c"/></svg>
<span class="t" style="top:2px;font-size:4.2px;color:#8e8e8e;left:63.76px;transform:scaleX(0.856);transform-origin:left center;">03s</span>
<svg style="left:66px;top:7px" width="1" height="2"><rect x="0.41" y="0.20" width="0.50" height="1.40" fill="#5c5c5c"/></svg>
<span class="t" style="top:2px;font-size:4.2px;color:#8e8e8e;left:85.88px;transform:scaleX(0.856);transform-origin:left center;">04s</span>
<svg style="left:88px;top:7px" width="2" height="2"><rect x="0.53" y="0.20" width="0.50" height="1.40" fill="#5c5c5c"/></svg>
<span class="t" style="top:2px;font-size:4.2px;color:#8e8e8e;left:108.00px;transform:scaleX(0.856);transform-origin:left center;">05s</span>
<svg style="left:110px;top:7px" width="2" height="2"><rect x="0.65" y="0.20" width="0.50" height="1.40" fill="#5c5c5c"/></svg>
<span class="t" style="top:2px;font-size:4.2px;color:#8e8e8e;left:130.12px;transform:scaleX(0.856);transform-origin:left center;">06s</span>
<svg style="left:132px;top:7px" width="2" height="2"><rect x="0.77" y="0.20" width="0.50" height="1.40" fill="#5c5c5c"/></svg>
<span class="t" style="top:2px;font-size:4.2px;color:#8e8e8e;left:152.24px;transform:scaleX(0.856);transform-origin:left center;">07s</span>
<svg style="left:154px;top:7px" width="2" height="2"><rect x="0.89" y="0.20" width="0.50" height="1.40" fill="#5c5c5c"/></svg>
</div>
<svg style="left:635px;top:298px" width="160" height="6"><rect x="0.20" y="0.20" width="159.60" height="5.20" fill="#6b6b6b"/></svg>
<svg style="left:634px;top:298px" width="3" height="6"><rect x="0.60" y="0.00" width="1.80" height="5.80" fill="#3b8eea" rx="0.60"/></svg>
<svg style="left:794px;top:298px" width="2" height="6"><rect x="0.00" y="0.00" width="1.80" height="5.80" fill="#3b8eea" rx="0.60"/></svg>
<svg style="left:635px;top:303px" width="160" height="3"><rect x="0.20" y="0.40" width="159.60" height="1.90" fill="#22962e"/></svg>
<svg style="left:635px;top:305px" width="160" height="2"><rect x="0.20" y="0.30" width="159.60" height="0.80" fill="#1c1c1c"/></svg>
<svg style="left:635px;top:306px" width="160" height="6"><rect x="0.20" y="0.20" width="159.00" height="5.20" fill="#82978f"/></svg>
<svg style="left:635px;top:311px" width="160" height="20"><rect x="0.20" y="0.60" width="159.00" height="19.40" fill="#3a3a3a"/></svg>
<svg style="left:635px;top:318px" width="160" height="1"><rect x="0.20" y="0.00" width="159.00" height="0.60" fill="#2a2a2a"/></svg>
<svg style="left:635px;top:324px" width="160" height="1"><rect x="0.20" y="0.40" width="159.00" height="0.60" fill="#2a2a2a"/></svg>
<svg style="left:635px;top:331px" width="160" height="7"><rect x="0.20" y="0.00" width="159.00" height="7.00" fill="#2c2c2c"/></svg>
<svg style="left:635px;top:338px" width="160" height="28"><rect x="0.20" y="0.00" width="159.00" height="27.20" fill="#3c3c3c"/></svg>
<svg style="left:635px;top:365px" width="160" height="50"><rect x="0.20" y="0.20" width="159.00" height="49.40" fill="#343434"/></svg>
<svg style="left:634px;top:414px" width="166" height="8"><rect x="0.60" y="0.60" width="165.40" height="7.40" fill="#1f1f1f"/></svg>
<svg style="left:0;top:0" width="800" height="426" viewBox="0 0 800 426"><defs><clipPath id="wv"><path d="M635.60,350.60V348.04H636.40V347.98H637.20V347.80H638.00V348.01H638.80V347.98H639.60V347.93H640.40V348.11H641.20V347.94H642.00V347.88H642.80V347.79H643.60V347.61H644.40V343.98H645.20V343.17H646.00V347.15H646.80V345.75H647.60V344.22H648.40V342.81H649.20V343.56H650.00V344.47H650.80V344.44H651.60V344.55H652.40V344.85H653.20V344.79H654.00V346.30H654.80V346.33H655.60V346.41H656.40V346.67H657.20V345.57H658.00V344.15H658.80V343.86H659.60V346.22H660.40V346.14H661.20V346.31H662.00V345.51H662.80V344.17H663.60V344.32H664.40V343.21H665.20V343.19H666.00V343.40H666.80V344.96H667.60V346.96H668.40V346.98H669.20V346.09H670.00V345.17H670.80V344.22H671.60V344.72H672.40V346.26H673.20V346.87H674.00V346.32H674.80V344.10H675.60V345.20H676.40V346.73H677.20V346.22H678.00V345.24H678.80V343.71H679.60V344.40H680.40V344.25H681.20V343.12H682.00V342.89H682.80V343.74H683.60V344.06H684.40V343.67H685.20V342.65H686.00V343.53H686.80V345.66H687.60V345.57H688.40V345.81H689.20V346.67H690.00V346.72H690.80V347.65H691.60V347.80H692.40V347.88H693.20V348.02H694.00V347.77H694.80V348.08H695.60V347.84H696.40V348.11H697.20V347.98H698.00V348.09H698.80V348.08H699.60V347.76H700.40V347.86H701.20V348.11H702.00V347.84H702.80V348.14H703.60V348.04H704.40V347.81H705.20V347.90H706.00V348.15H706.80V347.70H707.60V348.07H708.40V347.50H709.20V346.42H710.00V346.42H710.80V346.31H711.60V346.39H712.40V346.24H713.20V344.99H714.00V344.59H714.80V343.90H715.60V344.31H716.40V344.25H717.20V342.61H718.00V342.29H718.80V342.20H719.60V341.73H720.40V343.58H721.20V344.44H722.00V343.31H722.80V343.47H723.60V344.35H724.40V344.46H725.20V343.66H726.00V343.38H726.80V344.51H727.60V343.41H728.40V343.53H729.20V344.07H730.00V344.48H730.80V345.03H731.60V345.11H732.40V343.80H733.20V344.80H734.00V344.13H734.80V344.74H735.60V343.92H736.40V344.23H737.20V344.64H738.00V344.79H738.80V344.00H739.60V344.91H740.40V345.48H741.20V345.31H742.00V344.99H742.80V345.29H743.60V345.70H744.40V344.98H745.20V345.83H746.00V346.07H746.80V345.80H747.60V345.62H748.40V345.51H749.20V344.92H750.00V344.59H750.80V344.24H751.60V344.81H752.40V344.41H753.20V343.41H754.00V342.98H754.80V343.21H755.60V343.02H756.40V343.22H757.20V343.96H758.00V344.15H758.80V344.20H759.60V342.76H760.40V343.13H761.20V342.72H762.00V344.26H762.80V343.29H763.60V343.90H764.40V344.07H765.20V344.67H766.00V343.73H766.80V345.04H767.60V344.40H768.40V344.15H769.20V343.94H770.00V344.18H770.80V344.25H771.60V344.14H772.40V343.99H773.20V344.78H774.00V344.74H774.80V345.31H775.60V345.57H776.40V346.07H777.20V345.71H778.00V345.66H778.80V345.98H779.60V345.95H780.40V346.22H781.20V346.04H782.00V346.43H782.80V347.62H783.60V347.37H784.40V347.20H785.20V347.30H786.00V347.41H786.80V347.63H787.60V347.47H788.40V347.58H789.20V347.69H790.00V347.50H790.80V347.93H791.60V347.61H792.40V348.01H793.20V347.75H794.00V347.84H794.40V350.60Z"/><path d="M635.60,364.10V361.54H636.40V361.48H637.20V361.30H638.00V361.51H638.80V361.48H639.60V361.43H640.40V361.61H641.20V361.44H642.00V361.38H642.80V361.29H643.60V361.11H644.40V357.48H645.20V356.67H646.00V360.65H646.80V359.25H647.60V357.72H648.40V356.31H649.20V357.06H650.00V357.97H650.80V357.94H651.60V358.05H652.40V358.35H653.20V358.29H654.00V359.80H654.80V359.83H655.60V359.91H656.40V360.17H657.20V359.07H658.00V357.65H658.80V357.36H659.60V359.72H660.40V359.64H661.20V359.81H662.00V359.01H662.80V357.67H663.60V357.82H664.40V356.71H665.20V356.69H666.00V356.90H666.80V358.46H667.60V360.46H668.40V360.48H669.20V359.59H670.00V358.67H670.80V357.72H671.60V358.22H672.40V359.76H673.20V360.37H674.00V359.82H674.80V357.60H675.60V358.70H676.40V360.23H677.20V359.72H678.00V358.74H678.80V357.21H679.60V357.90H680.40V357.75H681.20V356.62H682.00V356.39H682.80V357.24H683.60V357.56H684.40V357.17H685.20V356.15H686.00V357.03H686.80V359.16H687.60V359.07H688.40V359.31H689.20V360.17H690.00V360.22H690.80V361.15H691.60V361.30H692.40V361.38H693.20V361.52H694.00V361.27H694.80V361.58H695.60V361.34H696.40V361.61H697.20V361.48H698.00V361.59H698.80V361.58H699.60V361.26H700.40V361.36H701.20V361.61H702.00V361.34H702.80V361.64H703.60V361.54H704.40V361.31H705.20V361.40H706.00V361.65H706.80V361.20H707.60V361.57H708.40V361.00H709.20V359.92H710.00V359.92H710.80V359.81H711.60V359.89H712.40V359.74H713.20V358.49H714.00V358.09H714.80V357.40H715.60V357.81H716.40V357.75H717.20V356.11H718.00V355.79H718.80V355.70H719.60V355.23H720.40V357.08H721.20V357.94H722.00V356.81H722.80V356.97H723.60V357.85H724.40V357.96H725.20V357.16H726.00V356.88H726.80V358.01H727.60V356.91H728.40V357.03H729.20V357.57H730.00V357.98H730.80V358.53H731.60V358.61H732.40V357.30H733.20V358.30H734.00V357.63H734.80V358.24H735.60V357.42H736.40V357.73H737.20V358.14H738.00V358.29H738.80V357.50H739.60V358.41H740.40V358.98H741.20V358.81H742.00V358.49H742.80V358.79H743.60V359.20H744.40V358.48H745.20V359.33H746.00V359.57H746.80V359.30H747.60V359.12H748.40V359.01H749.20V358.42H750.00V358.09H750.80V357.74H751.60V358.31H752.40V357.91H753.20V356.91H754.00V356.48H754.80V356.71H755.60V356.52H756.40V356.72H757.20V357.46H758.00V357.65H758.80V357.70H759.60V356.26H760.40V356.63H761.20V356.22H762.00V357.76H762.80V356.79H763.60V357.40H764.40V357.57H765.20V358.17H766.00V357.23H766.80V358.54H767.60V357.90H768.40V357.65H769.20V357.44H770.00V357.68H770.80V357.75H771.60V357.64H772.40V357.49H773.20V358.28H774.00V358.24H774.80V358.81H775.60V359.07H776.40V359.57H777.20V359.21H778.00V359.16H778.80V359.48H779.60V359.45H780.40V359.72H781.20V359.54H782.00V359.93H782.80V361.12H783.60V360.87H784.40V360.70H785.20V360.80H786.00V360.91H786.80V361.13H787.60V360.97H788.40V361.08H789.20V361.19H790.00V361.00H790.80V361.43H791.60V361.11H792.40V361.51H793.20V361.25H794.00V361.34H794.40V364.10Z"/></clipPath></defs><g clip-path="url(#wv)"><rect x="635" y="339" width="160" height="26" fill="#b9d2cd"/><path d="M635.6,339V365M637.2,339V365M638.8,339V365M640.4,339V365M642.0,339V365M643.6,339V365M645.2,339V365M646.8,339V365M648.4,339V365M650.0,339V365M651.6,339V365M653.2,339V365M654.8,339V365M656.4,339V365M658.0,339V365M659.6,339V365M661.2,339V365M662.8,339V365M664.4,339V365M666.0,339V365M667.6,339V365M669.2,339V365M670.8,339V365M672.4,339V365M674.0,339V365M675.6,339V365M677.2,339V365M678.8,339V365M680.4,339V365M682.0,339V365M683.6,339V365M685.2,339V365M686.8,339V365M688.4,339V365M690.0,339V365M691.6,339V365M693.2,339V365M694.8,339V365M696.4,339V365M698.0,339V365M699.6,339V365M701.2,339V365M702.8,339V365M704.4,339V365M706.0,339V365M707.6,339V365M709.2,339V365M710.8,339V365M712.4,339V365M714.0,339V365M715.6,339V365M717.2,339V365M718.8,339V365M720.4,339V365M722.0,339V365M723.6,339V365M725.2,339V365M726.8,339V365M728.4,339V365M730.0,339V365M731.6,339V365M733.2,339V365M734.8,339V365M736.4,339V365M738.0,339V365M739.6,339V365M741.2,339V365M742.8,339V365M744.4,339V365M746.0,339V365M747.6,339V365M749.2,339V365M750.8,339V365M752.4,339V365M754.0,339V365M755.6,339V365M757.2,339V365M758.8,339V365M760.4,339V365M762.0,339V365M763.6,339V365M765.2,339V365M766.8,339V365M768.4,339V365M770.0,339V365M771.6,339V365M773.2,339V365M774.8,339V365M776.4,339V365M778.0,339V365M779.6,339V365M781.2,339V365M782.8,339V365M784.4,339V365M786.0,339V365M787.6,339V365M789.2,339V365M790.8,339V365M792.4,339V365M794.0,339V365" stroke="#9fbab5" stroke-width="0.5" fill="none"/></g></svg>
<svg style="left:751px;top:296px" width="2" height="119"><rect x="0.70" y="0.00" width="1.00" height="118.60" fill="#2e6ab6"/></svg>
<svg style="left:749.9px;top:291.6px;" width="4.6" height="5" viewBox="0 0 4.6 5"><path d="M0.3,0.8 Q0.3,0.3 0.8,0.3 H3.8 Q4.3,0.3 4.3,0.8 V3 L2.3,4.8 L0.3,3 Z" fill="#3b8eea" stroke="#6faaf0" stroke-width="0.4"/></svg>
<svg style="left:750.6px;top:313.6px;" width="3.2" height="4" viewBox="0 0 3.2 4"><path d="M0.4,0.3 H2.8 M1.6,0.3 V3.7 M0.4,3.7 H2.8" stroke="#9db4cc" stroke-width="0.7" fill="none"/></svg>
<svg style="left:750.6px;top:320px;" width="3.2" height="4" viewBox="0 0 3.2 4"><path d="M0.4,0.3 H2.8 M1.6,0.3 V3.7 M0.4,3.7 H2.8" stroke="#9db4cc" stroke-width="0.7" fill="none"/></svg>
<svg style="left:750.6px;top:326.4px;" width="3.2" height="4" viewBox="0 0 3.2 4"><path d="M0.4,0.3 H2.8 M1.6,0.3 V3.7 M0.4,3.7 H2.8" stroke="#9db4cc" stroke-width="0.7" fill="none"/></svg>
<svg style="left:796.4px;top:297.6px;" width="3.6" height="5" viewBox="0 0 3.6 5"><path d="M0.4,0.4 H3.6 V3 L2,4.6 L0.4,3 Z" fill="#e0e0e0"/></svg>
<svg style="left:796px;top:306.6px;" width="4" height="4.6" viewBox="0 0 4 4.6"><path d="M3.6,0.4 L0.6,2.4 L3.6,4.2" stroke="#a8a8a8" stroke-width="0.7" fill="none"/></svg>
<svg style="left:636.6px;top:418px;" width="3" height="1" viewBox="0 0 3 1"><path d="M0,0.5 H3" stroke="#bdbdbd" stroke-width="0.8"/></svg>
<svg style="left:646px;top:418px" width="17" height="1"><rect x="0.00" y="0.30" width="17.00" height="0.50" fill="#6a6a6a"/></svg>
<svg style="left:643.2px;top:416.6px;" width="3.6" height="3.6" viewBox="0 0 3.6 3.6"><circle cx="1.8" cy="1.8" r="1.4" fill="#1f1f1f" stroke="#c8c8c8" stroke-width="0.6"/></svg>
<svg style="left:667.4px;top:416.6px;" width="6.4" height="3.4" viewBox="0 0 6.4 3.4"><path d="M0,3.4 L1.8,0.8 L3,2.2 L4.4,0 L6.4,3.4 Z" fill="#bdbdbd"/></svg>

<!-- ===== watermark ===== -->
<svg style="left:0;top:0" width="800" height="426" viewBox="0 0 800 426">
<path d="M744.8,398.2 C750,390 757,386.2 764,386.2 C771,386.2 778,390.4 782.6,398 C778,405.8 771,409.8 764,409.8 C757,409.8 750,406 744.8,398.2 Z" fill="#d8d8d8" fill-opacity="0.84"/>
<circle cx="763" cy="397" r="8.3" fill="#303030"/>
<circle cx="765.8" cy="393.8" r="3.1" fill="#cfcfcf"/>
<g fill="none" stroke="#d8d8d8" stroke-opacity="0.85" stroke-width="0.8">
<rect x="736.6" y="396.4" width="6.6" height="6.6" rx="1.6"/><circle cx="739.9" cy="399.7" r="1.6"/>
<rect x="723.8" y="407.8" width="6.6" height="6.6" rx="1.6"/><circle cx="727.1" cy="411.1" r="1.6"/>
</g>
</svg>
<span class="t" style="top:396px;font-size:8.2px;color:rgba(225,225,225,0.62);left:746.60px;transform:scaleX(0.993);transform-origin:left center;">@itsshahin</span>
<span class="t" style="top:408px;font-size:8.2px;color:rgba(225,225,225,0.85);left:733.60px;transform:scaleX(1.115);transform-origin:left center;">@animotion_</span>

<!-- ===== taskbar ===== -->
<svg style="left:0px;top:421px" width="800" height="5"><rect x="0.00" y="0.60" width="800.00" height="4.40" fill="#1d3a4c"/></svg>
<svg style="left:0px;top:420px" width="2" height="2"><rect x="0.00" y="0.40" width="2.00" height="1.60" fill="#1d3a4c"/></svg>
<svg style="left:18px;top:422px" width="114" height="4"><rect x="0.20" y="0.40" width="113.40" height="3.60" fill="#f6f6f6"/></svg>
<svg style="left:111px;top:424px" width="7" height="2"><rect x="0.00" y="0.00" width="7.00" height="2.00" fill="#9a9a3a"/></svg>
<svg style="left:122px;top:424px" width="7" height="2"><rect x="0.60" y="0.40" width="5.60" height="1.60" fill="#8a8a40"/></svg>
<svg style="left:229px;top:422px" width="20" height="4"><rect x="0.80" y="0.20" width="19.00" height="3.80" fill="#55677a"/></svg>
<svg style="left:180px;top:424px" width="3" height="2"><rect x="0.00" y="0.80" width="3.00" height="1.20" fill="#c0392b" opacity="0.75"/></svg>
<svg style="left:198px;top:424px" width="4" height="2"><rect x="0.60" y="0.80" width="3.40" height="1.20" fill="#c0392b" opacity="0.75"/></svg>
<svg style="left:217px;top:424px" width="5" height="2"><rect x="0.60" y="0.80" width="4.00" height="1.20" fill="#2a5a9a" opacity="0.75"/></svg>
<svg style="left:236px;top:424px" width="6" height="2"><rect x="0.00" y="0.80" width="6.00" height="1.20" fill="#3a5a8a" opacity="0.75"/></svg>
<svg style="left:258px;top:424px" width="5" height="2"><rect x="0.60" y="0.80" width="4.00" height="1.20" fill="#2a5fa8" opacity="0.75"/></svg>
<svg style="left:277px;top:424px" width="4" height="2"><rect x="0.40" y="0.80" width="3.40" height="1.20" fill="#2c4a7a" opacity="0.75"/></svg>
<svg style="left:296px;top:424px" width="4" height="2"><rect x="0.00" y="0.80" width="4.00" height="1.20" fill="#24507a" opacity="0.75"/></svg>
<svg style="left:313px;top:424px" width="5" height="2"><rect x="0.60" y="0.80" width="3.60" height="1.20" fill="#2a5a9a" opacity="0.75"/></svg>
<svg style="left:331px;top:424px" width="4" height="2"><rect x="0.00" y="0.80" width="3.40" height="1.20" fill="#3a6aaa" opacity="0.75"/></svg>
<svg style="left:349px;top:424px" width="5" height="2"><rect x="0.40" y="0.80" width="4.00" height="1.20" fill="#24507a" opacity="0.75"/></svg>
<svg style="left:366px;top:424px" width="4" height="2"><rect x="0.00" y="0.80" width="4.00" height="1.20" fill="#2a4a6a" opacity="0.75"/></svg>
<svg style="left:385px;top:424px" width="3" height="2"><rect x="0.00" y="0.80" width="3.00" height="1.20" fill="#2a5a8a" opacity="0.75"/></svg>
<svg style="left:413px;top:424px" width="3" height="2"><rect x="0.00" y="0.80" width="2.40" height="1.20" fill="#c8d0d8" opacity="0.75"/></svg>
<svg style="left:431px;top:424px" width="4" height="2"><rect x="0.60" y="0.80" width="3.40" height="1.20" fill="#3a7a6a" opacity="0.75"/></svg>
<svg style="left:450px;top:424px" width="6" height="2"><rect x="0.40" y="0.80" width="5.00" height="1.20" fill="#e8a84a" opacity="0.75"/></svg>
<svg style="left:470px;top:424px" width="3" height="2"><rect x="0.00" y="0.80" width="2.60" height="1.20" fill="#a8b8c8" opacity="0.75"/></svg>
<svg style="left:489px;top:424px" width="5" height="2"><rect x="0.00" y="0.80" width="4.60" height="1.20" fill="#6a6a2a" opacity="0.75"/></svg>
<svg style="left:508px;top:424px" width="4" height="2"><rect x="0.00" y="0.80" width="4.00" height="1.20" fill="#6a2a5a" opacity="0.75"/></svg>
<svg style="left:528px;top:424px" width="3" height="2"><rect x="0.60" y="0.80" width="2.00" height="1.20" fill="#a8b8c8" opacity="0.75"/></svg>
<svg style="left:548px;top:424px" width="3" height="2"><rect x="0.00" y="0.80" width="3.00" height="1.20" fill="#2a4a6a" opacity="0.75"/></svg>
<svg style="left:568px;top:424px" width="5" height="2"><rect x="0.00" y="0.80" width="4.40" height="1.20" fill="#8a9ab0" opacity="0.75"/></svg>
<svg style="left:588px;top:424px" width="3" height="2"><rect x="0.00" y="0.80" width="3.00" height="1.20" fill="#2a4a6a" opacity="0.75"/></svg>
<svg style="left:638px;top:424px" width="2" height="2"><rect x="0.00" y="0.80" width="2.00" height="1.20" fill="#9aa8b8" opacity="0.75"/></svg>
<svg style="left:652px;top:424px" width="2" height="2"><rect x="0.00" y="0.80" width="2.00" height="1.20" fill="#9aa8b8" opacity="0.75"/></svg>
<svg style="left:660px;top:424px" width="2" height="2"><rect x="0.00" y="0.80" width="1.60" height="1.20" fill="#b03030" opacity="0.75"/></svg>
<svg style="left:672px;top:424px" width="2" height="2"><rect x="0.00" y="0.80" width="2.00" height="1.20" fill="#9aa8b8" opacity="0.75"/></svg>
<span class="t" style="top:423.45px;font-size:5px;color:#e8e8e8;left:760.60px;transform:scaleX(1.053);transform-origin:left center;">6:03 PM</span>

<!-- ===== left window edge ===== -->
<svg style="left:0px;top:3px" width="2" height="423"><rect x="0.00" y="0.00" width="1.10" height="423.00" fill="#bdbdbd"/></svg>
</div>
</body>
</html>
